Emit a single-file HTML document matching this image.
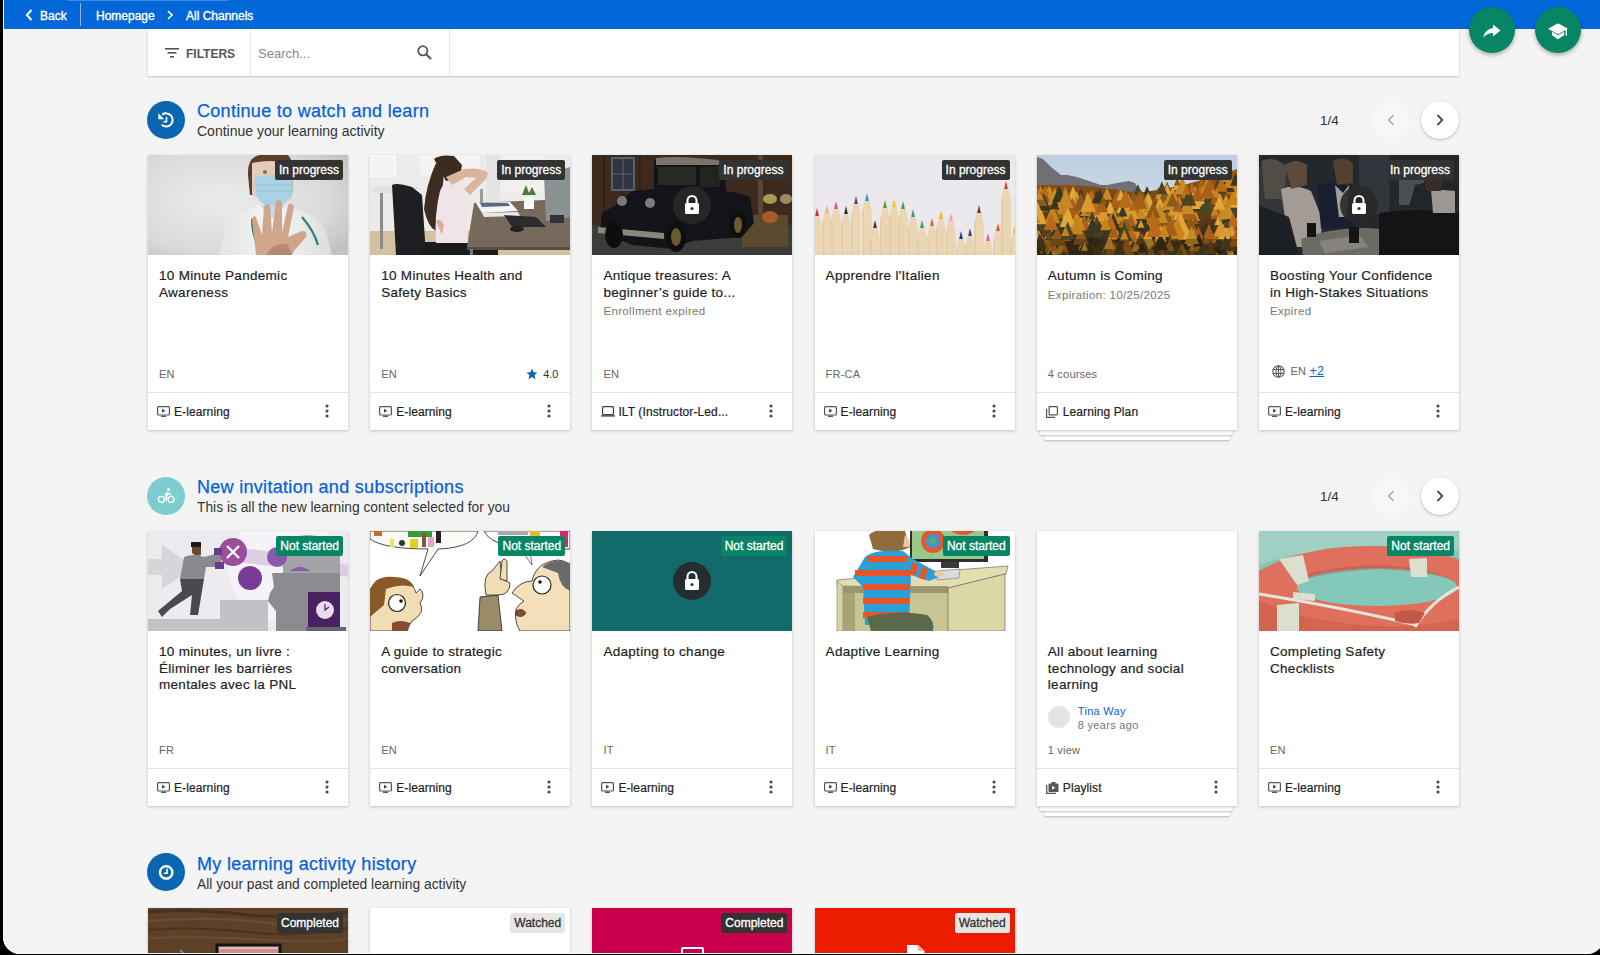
<!DOCTYPE html><html><head><meta charset="utf-8"><style>
*{box-sizing:border-box;margin:0;padding:0}
html,body{width:1600px;height:955px;overflow:hidden;background:#000}
body{font-family:"Liberation Sans",sans-serif;color:#333;position:relative}
.win{position:absolute;left:0;top:0;width:1600px;height:955px;background:#f4f4f4;overflow:hidden}
.mask{position:absolute;left:3px;top:-30px;width:1601px;height:983.5px;border-radius:0 0 17px 17px;box-shadow:0 0 0 60px #000, inset 1px -1px 0 rgba(255,255,255,0.95);z-index:50;pointer-events:none}
.abs{position:absolute}
.topbar{position:absolute;left:0;top:0;width:1600px;height:29px;background:#0268d9}
.topbar .t{position:absolute;top:9px;color:#fff;font-size:12px;line-height:15px;-webkit-text-stroke:0.35px #fff}
.fab{position:absolute;width:46px;height:46px;border-radius:50%;background:#078564;box-shadow:0 2px 4px rgba(0,0,0,.3)}
.fab svg{position:absolute;left:50%;top:50%;transform:translate(-50%,-40%)}
.filterbar{position:absolute;left:148px;top:29px;width:1311px;height:47px;background:#fff;box-shadow:0 1px 2px rgba(0,0,0,.2)}
.sec-ic{position:absolute;width:38px;height:38px;border-radius:50%}
.sec-ic svg{position:absolute;left:10px;top:10px}
.sec-t{position:absolute;font-size:18px;line-height:22px;color:#0760dc;letter-spacing:0.3px;-webkit-text-stroke:0.25px #0760dc}
.sec-s{position:absolute;font-size:14px;line-height:17px;color:#333}
.sec-s.n{font-size:13.8px}
.pg{position:absolute;font-size:13.5px;line-height:16px;color:#333}
.nav{position:absolute;width:38px;height:38px;border-radius:50%}
.nav.dis{background:#f7f7f7}
.nav.en{background:#fff;box-shadow:0 1px 3px rgba(0,0,0,.25)}
.nav svg{position:absolute;left:50%;top:50%;transform:translate(-50%,-50%)}
.card{position:absolute;width:200px;height:275px;background:#fff;box-shadow:0 1px 3px rgba(0,0,0,.22);overflow:hidden}
.stack1,.stack2{position:absolute;height:6px;background:#fff;box-shadow:0 1px 2px rgba(0,0,0,.25);border-radius:0 0 2px 2px}
.stack1{width:193px}
.stack2{width:186px}
.img{position:absolute;left:0;top:0;width:200px;height:100px;overflow:hidden;background:#fff}
.img svg{display:block}
.badge{position:absolute;top:5px;right:5px;height:20px;line-height:20px;padding:0 4px;font-size:12px;border-radius:2px}
.badge.dark{background:#333;color:#fff;-webkit-text-stroke:0.3px #fff}
.badge.green{background:#078564;color:#fff;-webkit-text-stroke:0.3px #fff}
.badge.light{background:#e6e6e6;color:#333;-webkit-text-stroke:0.3px #333}
.lock{position:absolute;left:81px;top:31px;width:38px;height:38px;border-radius:50%;background:rgba(40,40,40,0.9)}
.lock svg{position:absolute;left:11px;top:9px}
.title{position:absolute;left:11px;top:113px;width:180px;font-size:13.5px;line-height:16.5px;color:#1e1e1e;letter-spacing:0.3px;-webkit-text-stroke:0.2px #1e1e1e}
.sub{position:absolute;left:11px;font-size:11.5px;line-height:14px;color:#777;letter-spacing:0.35px}
.lang{position:absolute;left:11px;top:212px;font-size:11px;line-height:14px;color:#666;letter-spacing:0.2px}
.div{position:absolute;left:0;top:237px;width:200px;height:1px;background:#e3e3e3}
.foot{position:absolute;left:0;top:238px;width:200px;height:37px}
.ficon{position:absolute;left:9px;top:13px;line-height:0}
.ftxt{position:absolute;left:26px;top:11.5px;font-size:12px;line-height:15px;color:#222;letter-spacing:0.1px;-webkit-text-stroke:0.2px #222}
.kebab{position:absolute;left:177px;top:11px;line-height:0}
</style></head><body><div class="win">
<div class="topbar"><div class="abs" style="left:67px;top:0;width:162px;height:1px;background:rgba(255,255,255,0.22)"></div>
<svg class="abs" style="left:25px;top:9px" width="8" height="12" viewBox="0 0 8 12"><path d="M6.5 1 L1.8 6 L6.5 11" fill="none" stroke="#fff" stroke-width="2"/></svg>
<span class="t" style="left:40px">Back</span>
<div class="abs" style="left:80px;top:3px;width:1px;height:23px;background:#8fb6ee"></div>
<span class="t" style="left:96px">Homepage</span>
<svg class="abs" style="left:167px;top:10px" width="6" height="10" viewBox="0 0 6 10"><path d="M1 1 L5 5 L1 9" fill="none" stroke="#fff" stroke-width="1.6"/></svg>
<span class="t" style="left:186px">All Channels</span>
</div><div class="fab" style="left:1469px;top:6.5px"><svg width="18" height="14" viewBox="0 0 18 14"><path d="M10 0 L17.5 6 L10 12 V8.5 Q3 8.5 0 14 Q1 5 10 3.5 Z" fill="#fff"/></svg></div>
<div class="fab" style="left:1535px;top:6.5px"><svg width="20" height="17" viewBox="0 0 20 17"><path d="M10 0 L20 5.5 L10 11 L0 5.5 Z" fill="#fff"/><path d="M4 8.5 V12 L10 16 L16 12 V8.5 L10 12 Z" fill="#fff"/><rect x="17.5" y="5.5" width="1.5" height="7" fill="#fff"/></svg></div><div class="filterbar">
<svg class="abs" style="left:17px;top:19px" width="14" height="10" viewBox="0 0 14 10"><rect x="0" y="0" width="14" height="1.6" fill="#555"/><rect x="2.5" y="4" width="9" height="1.6" fill="#555"/><rect x="5" y="8" width="4" height="1.6" fill="#555"/></svg>
<span class="abs" style="left:38px;top:17px;font-size:12px;line-height:16px;font-weight:bold;color:#555">FILTERS</span>
<div class="abs" style="left:102px;top:0;width:1px;height:47px;background:#e6e6e6"></div>
<span class="abs" style="left:110px;top:17px;font-size:13px;line-height:16px;color:#888">Search...</span>
<svg class="abs" style="left:269px;top:16px" width="15" height="15" viewBox="0 0 15 15"><circle cx="5.8" cy="5.8" r="4.6" fill="none" stroke="#555" stroke-width="1.8"/><path d="M9.2 9.2 L14 14" stroke="#555" stroke-width="2"/></svg>
<div class="abs" style="left:301px;top:0;width:1px;height:47px;background:#e6e6e6"></div>
</div><div class="sec-ic" style="left:147px;top:101px;background:#0a66b1"><svg width="18" height="18" viewBox="0 0 18 18"><path d="M4.6 13.8 A6.6 6.6 0 1 0 5.2 3.6" fill="none" stroke="#fff" stroke-width="2"/><path d="M1.3 2.3 V8.2 H7.2 Z" fill="#fff"/><path d="M9.5 6 V10.7 H6.4" fill="none" stroke="#fff" stroke-width="1.6"/></svg></div><div class="sec-t" style="left:197px;top:100px">Continue to watch and learn</div><div class="sec-s" style="left:197px;top:123px">Continue your learning activity</div><div class="pg" style="left:1320px;top:113px">1/4</div><div class="nav dis" style="left:1372px;top:101px"><svg width="8" height="12" viewBox="0 0 8 12"><path d="M6.5 1 L1.8 6 L6.5 11" fill="none" stroke="#aaa" stroke-width="1.6"/></svg></div><div class="nav en" style="left:1421px;top:101px"><svg width="8" height="12" viewBox="0 0 8 12"><path d="M1.5 1 L6.2 6 L1.5 11" fill="none" stroke="#333" stroke-width="1.8"/></svg></div><div class="sec-ic" style="left:147px;top:477px;background:#7dcdd0"><svg width="18" height="18" viewBox="0 0 18 18"><circle cx="4.4" cy="12.4" r="3" fill="none" stroke="#fff" stroke-width="1.3"/><circle cx="14" cy="12.4" r="3" fill="none" stroke="#fff" stroke-width="1.3"/><circle cx="11.5" cy="2.6" r="1.5" fill="#fff"/><path d="M7.8 7.6 Q8.3 5.1 10.8 5.1 L14.6 7.4 L14.2 8.3 L11.1 7.3 L10.2 9.6 L9.7 14.2 L8.6 14.2 L8.6 9.8 Z" fill="#fff"/></svg></div><div class="sec-t" style="left:197px;top:476px">New invitation and subscriptions</div><div class="sec-s n" style="left:197px;top:499px">This is all the new learning content selected for you</div><div class="pg" style="left:1320px;top:489px">1/4</div><div class="nav dis" style="left:1372px;top:477px"><svg width="8" height="12" viewBox="0 0 8 12"><path d="M6.5 1 L1.8 6 L6.5 11" fill="none" stroke="#aaa" stroke-width="1.6"/></svg></div><div class="nav en" style="left:1421px;top:477px"><svg width="8" height="12" viewBox="0 0 8 12"><path d="M1.5 1 L6.2 6 L1.5 11" fill="none" stroke="#333" stroke-width="1.8"/></svg></div><div class="sec-ic" style="left:147px;top:852.5px;background:#0a66b1"><svg width="18" height="18" viewBox="0 0 18 18"><circle cx="9.2" cy="9.4" r="6.2" fill="none" stroke="#fff" stroke-width="2.4"/><path d="M10 5.8 V10.2 H6.8" fill="none" stroke="#fff" stroke-width="1.6"/></svg></div><div class="sec-t" style="left:197px;top:853.0px">My learning activity history</div><div class="sec-s n" style="left:197px;top:876.0px">All your past and completed learning activity</div><div class="card" style="left:148px;top:155px"><div class="img"><svg width="200" height="100" viewBox="0 0 200 100">
<defs><radialGradient id="d1" cx="0.38" cy="0.45" r="0.75"><stop offset="0" stop-color="#ececec"/><stop offset="0.7" stop-color="#dadada"/><stop offset="1" stop-color="#c2c2c2"/></radialGradient>
<linearGradient id="d1c" x1="0" y1="0" x2="1" y2="0"><stop offset="0" stop-color="#e4e4e4"/><stop offset="0.5" stop-color="#f6f6f6"/><stop offset="1" stop-color="#dcdcdc"/></linearGradient></defs>
<rect width="200" height="100" fill="url(#d1)"/>
<path d="M100 20 Q99 2 112 0 H140 Q146 6 145 22 L144 40 H102 Z" fill="#5a3e2c"/>
<path d="M104 8 Q120 4 142 8 L144 40 Q124 50 104 40 Z" fill="#e6cbb8"/>
<path d="M106 22 Q124 18 145 22 L144 42 Q134 52 124 52 Q112 50 108 40 Z" fill="#a9d2e6"/>
<path d="M108 30 H144 M108 36 H144" stroke="#93bcd2" stroke-width="1"/>
<circle cx="117" cy="17" r="2" fill="#6a7a6a"/>
<path d="M72 100 L76 74 Q80 62 100 56 L110 50 H140 L152 56 Q172 62 178 76 L184 100 Z" fill="url(#d1c)"/>
<path d="M112 50 L124 64 L138 50 Z" fill="#c8d8e8"/>
<path d="M104 64 Q104 80 110 90" stroke="#2f7c7a" stroke-width="2" fill="none"/>
<path d="M154 62 Q166 76 170 90" stroke="#2f7c7a" stroke-width="2.2" fill="none"/>
<path d="M108 100 L104 64 Q104 60 108 62 L114 80 L116 52 Q118 47 122 50 L124 78 L128 46 Q132 43 134 48 L134 78 L140 50 Q144 46 146 52 L140 82 L154 76 Q160 76 158 82 L146 96 L144 100 Z" fill="#cfa58c"/>
<path d="M118 100 Q126 86 140 90 L144 100 Z" fill="#b88a72"/>
</svg><span class="badge dark">In progress</span></div><div class="title">10 Minute Pandemic<br>Awareness</div><div class="lang">EN</div><div class="div"></div><div class="foot"><span class="ficon"><svg width="13" height="11" viewBox="0 0 13 11"><rect x="0.6" y="0.6" width="11.8" height="8.4" rx="1" fill="none" stroke="#555" stroke-width="1.2"/><path d="M5 2.8 L8.4 4.8 L5 6.8 Z" fill="#444"/><rect x="4" y="9.6" width="5" height="1.3" fill="#444"/></svg></span><span class="ftxt">E-learning</span><span class="kebab"><svg width="4" height="14" viewBox="0 0 4 14"><circle cx="2" cy="2" r="1.55" fill="#4a4a4a"/><circle cx="2" cy="7" r="1.55" fill="#4a4a4a"/><circle cx="2" cy="12" r="1.55" fill="#4a4a4a"/></svg></span></div></div><div class="card" style="left:370.2px;top:155px"><div class="img"><svg width="200" height="100" viewBox="0 0 200 100">
<rect width="200" height="100" fill="#ecebea"/>
<rect x="0" y="0" width="26" height="22" fill="#f8f8f6"/>
<rect x="2" y="2" width="22" height="18" fill="#f2f2f0"/>
<rect x="50" y="0" width="60" height="20" fill="#f4f4f2"/>
<rect x="116" y="0" width="14" height="48" fill="#e4e4e2"/>
<rect x="130" y="0" width="44" height="38" fill="#f0f0ee"/>
<path d="M0 76 H200 V100 H0 Z" fill="#d6c0a2"/>
<path d="M3 32 H48 L46 38 H3 Z" fill="#dde4e4"/>
<rect x="10" y="38" width="3" height="56" fill="#8c8c8c"/>
<rect x="110" y="34" width="3" height="36" fill="#9a9a9a"/>
<path d="M22 30 Q26 27 42 32 L52 40 L56 100 H26 Z" fill="#1e1f22"/>
<path d="M50 87 H128 V100 H50 Z" fill="#1c1c1e"/>
<path d="M64 4 Q70 -1 84 1 L92 10 L90 22 L76 26 Z" fill="#3a2a20"/>
<path d="M66 8 Q56 30 54 54 Q58 72 66 76 L72 40 L74 18 Z" fill="#3e2c22"/>
<path d="M74 28 Q88 25 96 32 L98 88 H66 Q64 60 70 36 Z" fill="#f1e4e8"/>
<path d="M76 22 L94 14 Q112 12 118 18 L116 24 L100 40 L94 34 L106 23 L96 22 L82 30 Z" fill="#dcb49c"/>
<path d="M66 66 Q70 62 74 70 L72 80 Z" fill="#d8b098"/>
<path d="M97 92 L104 48 L200 44 V92 Z" fill="#77695c"/>
<path d="M97 92 H200 V95 H97 Z" fill="#5a4e44"/>
<rect x="100" y="94" width="3" height="6" fill="#777"/>
<path d="M106 48 L140 47 L148 56 L112 58 Z" fill="#f4f4f4"/>
<path d="M110 48 L138 48 L140 51 L112 52 Z" fill="#5a6a8a"/>
<path d="M112 58 L148 57 L150 61 L114 62 Z" fill="#e8e8e8"/>
<path d="M134 60 L166 62 L176 72 L142 72 Z" fill="#2a2c30"/>
<ellipse cx="147" cy="74" rx="7" ry="3" fill="#222"/>
<rect x="154" y="42" width="10" height="12" fill="#f8f8f8"/>
<path d="M152 40 L156 30 L159 38 L162 32 L166 40 Z" fill="#4a7a3a"/>
<path d="M174 20 L200 12 V62 L176 66 Z" fill="#8a9294"/>
<rect x="180" y="60" width="14" height="8" fill="#333"/>
</svg><span class="badge dark">In progress</span></div><div class="title">10 Minutes Health and<br>Safety Basics</div><div class="abs" style="left:156px;top:212px;font-size:11px;line-height:14px;color:#333"><svg style="vertical-align:-2px;margin-right:5px" width="12" height="12" viewBox="0 0 12 12"><path d="M6 0.5 L7.6 4.3 L11.6 4.5 L8.5 7.1 L9.5 11.2 L6 9 L2.5 11.2 L3.5 7.1 L0.4 4.5 L4.4 4.3 Z" fill="#0a66b1"/></svg>4.0</div><div class="lang">EN</div><div class="div"></div><div class="foot"><span class="ficon"><svg width="13" height="11" viewBox="0 0 13 11"><rect x="0.6" y="0.6" width="11.8" height="8.4" rx="1" fill="none" stroke="#555" stroke-width="1.2"/><path d="M5 2.8 L8.4 4.8 L5 6.8 Z" fill="#444"/><rect x="4" y="9.6" width="5" height="1.3" fill="#444"/></svg></span><span class="ftxt">E-learning</span><span class="kebab"><svg width="4" height="14" viewBox="0 0 4 14"><circle cx="2" cy="2" r="1.55" fill="#4a4a4a"/><circle cx="2" cy="7" r="1.55" fill="#4a4a4a"/><circle cx="2" cy="12" r="1.55" fill="#4a4a4a"/></svg></span></div></div><div class="card" style="left:592.4px;top:155px"><div class="img"><svg width="200" height="100" viewBox="0 0 200 100">
<rect width="200" height="100" fill="#33241a"/>
<rect x="0" y="0" width="200" height="72" fill="#3e2a1c"/>
<path d="M12 0 V72 M30 0 V72 M48 0 V72 M66 0 V72" stroke="#2a1c12" stroke-width="1.2"/>
<rect x="19" y="2" width="24" height="34" fill="#58606a"/>
<rect x="21" y="4" width="20" height="30" fill="#2e3440"/>
<path d="M31 4 V34 M21 19 H41" stroke="#58606a" stroke-width="1.2"/>
<rect x="166" y="0" width="5" height="64" fill="#5a4632"/>
<path d="M0 70 H200 V100 H0 Z" fill="#3c3c3c"/>
<path d="M150 60 H196 V92 H150 Z" fill="#5a4a30"/>
<ellipse cx="178" cy="62" rx="8" ry="6" fill="#a85a28"/>
<ellipse cx="178" cy="44" rx="7" ry="5" fill="#a89a58"/>
<ellipse cx="194" cy="44" rx="6" ry="5" fill="#9a8a60"/>
<path d="M62 6 Q64 2 100 3 L132 6 L134 36 L146 38 L158 42 L162 68 L150 82 L100 86 L80 94 L40 90 L8 76 L10 58 L24 50 L40 36 L62 34 Z" fill="#12141a"/>
<path d="M64 3 Q90 0 132 6 L130 10 L64 10 Z" fill="#7a7468"/>
<path d="M66 12 H104 V30 H66 Z" fill="#262a22"/>
<path d="M108 12 H128 V32 H108 Z" fill="#222420"/>
<path d="M6 72 L72 78 L72 84 L6 78 Z" fill="#8a8678"/>
<circle cx="30" cy="46" r="5" fill="#7a7a7a"/><circle cx="58" cy="48" r="5" fill="#7a7a7a"/>
<ellipse cx="22" cy="80" rx="9" ry="13" fill="#0e0e0e"/>
<ellipse cx="84" cy="82" rx="10" ry="15" fill="#0e0e0e"/>
<ellipse cx="84" cy="82" rx="5" ry="9" fill="#6a5a30"/>
<ellipse cx="146" cy="70" rx="8" ry="13" fill="#0e0e0e"/>
<ellipse cx="146" cy="70" rx="4" ry="8" fill="#6a5a30"/>
</svg><div class="lock"><svg width="16" height="20" viewBox="0 0 16 20"><path d="M3.5 8 V5.5 A4.5 4.5 0 0 1 12.5 5.5 V8" fill="none" stroke="#fff" stroke-width="2"/><rect x="1" y="8" width="14" height="11" rx="1.5" fill="#fff"/><circle cx="8" cy="13.5" r="1.6" fill="#333"/></svg></div><span class="badge dark">In progress</span></div><div class="title">Antique treasures: A<br>beginner’s guide to...</div><div class="sub" style="top:149px;color:#777">Enrollment expired</div><div class="lang">EN</div><div class="div"></div><div class="foot"><span class="ficon"><svg width="14" height="11" viewBox="0 0 14 11"><rect x="1.6" y="0.6" width="10.8" height="8" rx="0.6" fill="none" stroke="#444" stroke-width="1.2"/><rect x="0" y="9.2" width="14" height="1.4" fill="#444"/></svg></span><span class="ftxt">ILT (Instructor-Led...</span><span class="kebab"><svg width="4" height="14" viewBox="0 0 4 14"><circle cx="2" cy="2" r="1.55" fill="#4a4a4a"/><circle cx="2" cy="7" r="1.55" fill="#4a4a4a"/><circle cx="2" cy="12" r="1.55" fill="#4a4a4a"/></svg></span></div></div><div class="card" style="left:814.6px;top:155px"><div class="img"><svg width="200" height="100" viewBox="0 0 200 100"><rect width="200" height="100" fill="#ece9ee"/><path d="M-2.8 100 V71 L0.8 55 L3.2 55 L6.8 71 V100 Z" fill="#ebd6b4"/><path d="M-1.9999999999999998 100 V71" stroke="#d8c09a" stroke-width="0.8"/><path d="M0.19999999999999996 61 L2 53 L3.8 61 Z" fill="#d8203a"/><path d="M7.2 100 V68 L10.8 52 L13.2 52 L16.8 68 V100 Z" fill="#ebd6b4"/><path d="M8.0 100 V68" stroke="#d8c09a" stroke-width="0.8"/><path d="M10.2 58 L12 50 L13.8 58 Z" fill="#f0b090"/><path d="M16.2 100 V64 L19.8 48 L22.2 48 L25.8 64 V100 Z" fill="#ebd6b4"/><path d="M17.0 100 V64" stroke="#d8c09a" stroke-width="0.8"/><path d="M19.2 54 L21 46 L22.8 54 Z" fill="#e84a9a"/><path d="M26.2 100 V69 L29.8 53 L32.2 53 L35.8 69 V100 Z" fill="#ebd6b4"/><path d="M27.0 100 V69" stroke="#d8c09a" stroke-width="0.8"/><path d="M29.2 59 L31 51 L32.8 59 Z" fill="#303030"/><path d="M36.2 100 V59 L39.8 43 L42.2 43 L45.8 59 V100 Z" fill="#ebd6b4"/><path d="M37.0 100 V59" stroke="#d8c09a" stroke-width="0.8"/><path d="M39.2 49 L41 41 L42.8 49 Z" fill="#5a3a8a"/><path d="M47.2 100 V56 L50.8 40 L53.2 40 L56.8 56 V100 Z" fill="#ebd6b4"/><path d="M48.0 100 V56" stroke="#d8c09a" stroke-width="0.8"/><path d="M50.2 46 L52 38 L53.8 46 Z" fill="#20a0d8"/><path d="M55.2 100 V83 L58.8 67 L61.2 67 L64.8 83 V100 Z" fill="#ebd6b4"/><path d="M56.0 100 V83" stroke="#d8c09a" stroke-width="0.8"/><path d="M58.2 73 L60 65 L61.8 73 Z" fill="#6a2030"/><path d="M65.2 100 V63 L68.8 47 L71.2 47 L74.8 63 V100 Z" fill="#ebd6b4"/><path d="M66.0 100 V63" stroke="#d8c09a" stroke-width="0.8"/><path d="M68.2 53 L70 45 L71.8 53 Z" fill="#40a030"/><path d="M74.2 100 V62 L77.8 46 L80.2 46 L83.8 62 V100 Z" fill="#ebd6b4"/><path d="M75.0 100 V62" stroke="#d8c09a" stroke-width="0.8"/><path d="M77.2 52 L79 44 L80.8 52 Z" fill="#f0c820"/><path d="M83.2 100 V64 L86.8 48 L89.2 48 L92.8 64 V100 Z" fill="#ebd6b4"/><path d="M84.0 100 V64" stroke="#d8c09a" stroke-width="0.8"/><path d="M86.2 54 L88 46 L89.8 54 Z" fill="#40a040"/><path d="M93.2 100 V72 L96.8 56 L99.2 56 L102.8 72 V100 Z" fill="#ebd6b4"/><path d="M94.0 100 V72" stroke="#d8c09a" stroke-width="0.8"/><path d="M96.2 62 L98 54 L99.8 62 Z" fill="#20a0a0"/><path d="M102.2 100 V83 L105.8 67 L108.2 67 L111.8 83 V100 Z" fill="#ebd6b4"/><path d="M103.0 100 V83" stroke="#d8c09a" stroke-width="0.8"/><path d="M105.2 73 L107 65 L108.8 73 Z" fill="#20a070"/><path d="M112.2 100 V81 L115.8 65 L118.2 65 L121.8 81 V100 Z" fill="#ebd6b4"/><path d="M113.0 100 V81" stroke="#d8c09a" stroke-width="0.8"/><path d="M115.2 71 L117 63 L118.8 71 Z" fill="#f06020"/><path d="M121.2 100 V74 L124.8 58 L127.2 58 L130.8 74 V100 Z" fill="#ebd6b4"/><path d="M122.0 100 V74" stroke="#d8c09a" stroke-width="0.8"/><path d="M124.2 64 L126 56 L127.8 64 Z" fill="#f0b820"/><path d="M131.2 100 V76 L134.8 60 L137.2 60 L140.8 76 V100 Z" fill="#ebd6b4"/><path d="M132.0 100 V76" stroke="#d8c09a" stroke-width="0.8"/><path d="M134.2 66 L136 58 L137.8 66 Z" fill="#f0a0c0"/><path d="M141.2 100 V94 L144.8 78 L147.2 78 L150.8 94 V100 Z" fill="#ebd6b4"/><path d="M142.0 100 V94" stroke="#d8c09a" stroke-width="0.8"/><path d="M144.2 84 L146 76 L147.8 84 Z" fill="#203a8a"/><path d="M150.2 100 V91 L153.8 75 L156.2 75 L159.8 91 V100 Z" fill="#ebd6b4"/><path d="M151.0 100 V91" stroke="#d8c09a" stroke-width="0.8"/><path d="M153.2 81 L155 73 L156.8 81 Z" fill="#3a3a9a"/><path d="M159.2 100 V68 L162.8 52 L165.2 52 L168.8 68 V100 Z" fill="#ebd6b4"/><path d="M160.0 100 V68" stroke="#d8c09a" stroke-width="0.8"/><path d="M162.2 58 L164 50 L165.8 58 Z" fill="#6a3a2a"/><path d="M168.2 100 V96 L171.8 80 L174.2 80 L177.8 96 V100 Z" fill="#ebd6b4"/><path d="M169.0 100 V96" stroke="#d8c09a" stroke-width="0.8"/><path d="M171.2 86 L173 78 L174.8 86 Z" fill="#e060a0"/><path d="M178.2 100 V86 L181.8 70 L184.2 70 L187.8 86 V100 Z" fill="#ebd6b4"/><path d="M179.0 100 V86" stroke="#d8c09a" stroke-width="0.8"/><path d="M181.2 76 L183 68 L184.8 76 Z" fill="#f05020"/><path d="M186.2 100 V44 L189.8 28 L192.2 28 L195.8 44 V100 Z" fill="#ebd6b4"/><path d="M187.0 100 V44" stroke="#d8c09a" stroke-width="0.8"/><path d="M189.2 34 L191 26 L192.8 34 Z" fill="#d83a3a"/><path d="M195.2 100 V88 L198.8 72 L201.2 72 L204.8 88 V100 Z" fill="#ebd6b4"/><path d="M196.0 100 V88" stroke="#d8c09a" stroke-width="0.8"/><path d="M198.2 78 L200 70 L201.8 78 Z" fill="#e0b040"/></svg><span class="badge dark">In progress</span></div><div class="title">Apprendre l'Italien</div><div class="lang">FR-CA</div><div class="div"></div><div class="foot"><span class="ficon"><svg width="13" height="11" viewBox="0 0 13 11"><rect x="0.6" y="0.6" width="11.8" height="8.4" rx="1" fill="none" stroke="#555" stroke-width="1.2"/><path d="M5 2.8 L8.4 4.8 L5 6.8 Z" fill="#444"/><rect x="4" y="9.6" width="5" height="1.3" fill="#444"/></svg></span><span class="ftxt">E-learning</span><span class="kebab"><svg width="4" height="14" viewBox="0 0 4 14"><circle cx="2" cy="2" r="1.55" fill="#4a4a4a"/><circle cx="2" cy="7" r="1.55" fill="#4a4a4a"/><circle cx="2" cy="12" r="1.55" fill="#4a4a4a"/></svg></span></div></div><div class="stack2" style="left:1043.8px;top:434px"></div><div class="stack1" style="left:1040.3px;top:429px"></div><div class="card" style="left:1036.8px;top:155px"><div class="img"><svg width="200" height="100" viewBox="0 0 200 100"><defs><linearGradient id="sk" x1="0" y1="0" x2="0" y2="1"><stop offset="0" stop-color="#bccfe0"/><stop offset="1" stop-color="#dfe4e8"/></linearGradient>
<linearGradient id="fb" x1="0" y1="0" x2="0" y2="1"><stop offset="0" stop-color="#9a5a18"/><stop offset="1" stop-color="#2e2214"/></linearGradient></defs>
<rect width="200" height="100" fill="url(#sk)"/>
<path d="M0 2 L6 4 L14 12 L24 20 L30 20 L40 22 L52 26 L64 30 L70 30 L80 28 L92 26 L98 28 L104 38 H0 Z" fill="#707074"/>
<path d="M0 30 Q50 28 100 38 Q150 32 200 14 V100 H0 Z" fill="url(#fb)"/><path d="M63.0 42.1 L56.4 57.9 H69.6 Z" fill="#d89a30"/><path d="M167.5 25.0 L161.2 40.0 H173.8 Z" fill="#8a5a1a"/><path d="M40.1 36.4 L34.6 49.4 H45.6 Z" fill="#3a3620"/><path d="M14.0 59.1 L6.5 77.0 H21.6 Z" fill="#d89a30"/><path d="M194.0 67.9 L187.7 82.8 H200.3 Z" fill="#c8841c"/><path d="M116.2 55.0 L107.9 74.7 H124.5 Z" fill="#c8841c"/><path d="M111.9 35.9 L106.4 49.0 H117.4 Z" fill="#8a5a1a"/><path d="M19.7 51.0 L12.3 68.8 H27.2 Z" fill="#b86a18"/><path d="M16.6 69.6 L12.3 79.8 H20.9 Z" fill="#d89a30"/><path d="M110.0 31.0 L106.4 39.7 H113.7 Z" fill="#3a3620"/><path d="M99.2 69.1 L92.0 86.4 H106.5 Z" fill="#c88a26"/><path d="M118.0 59.1 L113.1 70.7 H122.8 Z" fill="#b86a18"/><path d="M141.8 40.5 L135.5 55.4 H148.0 Z" fill="#8a5a1a"/><path d="M99.0 56.6 L93.4 70.0 H104.6 Z" fill="#d89a30"/><path d="M19.8 58.8 L12.6 75.9 H27.0 Z" fill="#b86a18"/><path d="M191.0 49.9 L182.8 69.5 H199.2 Z" fill="#d89a30"/><path d="M155.6 65.5 L147.8 84.0 H163.3 Z" fill="#a86018"/><path d="M66.4 55.8 L60.6 69.8 H72.3 Z" fill="#c88a26"/><path d="M9.4 35.3 L4.7 46.5 H14.2 Z" fill="#d89a30"/><path d="M7.7 78.6 L1.1 94.4 H14.4 Z" fill="#4a3a1c"/><path d="M181.3 44.5 L173.2 63.8 H189.4 Z" fill="#a86018"/><path d="M30.3 38.0 L26.6 46.7 H33.9 Z" fill="#e0a83a"/><path d="M22.2 46.8 L16.8 59.5 H27.5 Z" fill="#c88a26"/><path d="M11.9 60.7 L5.8 75.3 H18.1 Z" fill="#b86a18"/><path d="M167.0 88.7 L162.3 100.1 H171.8 Z" fill="#4a4424"/><path d="M138.4 51.6 L133.8 62.4 H142.9 Z" fill="#d89a30"/><path d="M32.0 46.2 L27.5 57.0 H36.5 Z" fill="#c88a26"/><path d="M169.5 32.0 L164.7 43.4 H174.3 Z" fill="#b86a18"/><path d="M83.0 57.7 L76.8 72.5 H89.2 Z" fill="#b86a18"/><path d="M140.0 62.0 L133.5 77.4 H146.5 Z" fill="#c8841c"/><path d="M90.9 91.4 L82.7 110.8 H99.1 Z" fill="#4a3a1c"/><path d="M77.8 65.1 L72.4 77.9 H83.1 Z" fill="#3a3620"/><path d="M9.1 43.5 L5.0 53.4 H13.3 Z" fill="#a86018"/><path d="M121.2 32.3 L114.9 47.1 H127.4 Z" fill="#8a5a1a"/><path d="M16.3 54.8 L12.8 63.1 H19.8 Z" fill="#3a3620"/><path d="M124.0 35.4 L119.3 46.5 H128.6 Z" fill="#a86018"/><path d="M121.5 60.3 L117.5 69.7 H125.4 Z" fill="#c88a26"/><path d="M203.6 52.7 L197.8 66.5 H209.4 Z" fill="#d89a30"/><path d="M25.3 82.4 L18.2 99.2 H32.4 Z" fill="#c88a26"/><path d="M28.9 31.4 L20.7 50.8 H37.1 Z" fill="#8a5a1a"/><path d="M71.0 79.0 L63.0 98.0 H78.9 Z" fill="#6a4418"/><path d="M176.3 74.4 L171.6 85.6 H181.0 Z" fill="#a86018"/><path d="M185.7 44.8 L181.3 55.4 H190.2 Z" fill="#8a5a1a"/><path d="M158.6 45.5 L154.1 56.1 H163.1 Z" fill="#3a3620"/><path d="M164.3 85.1 L157.2 101.9 H171.4 Z" fill="#4a3a1c"/><path d="M69.7 34.1 L66.2 42.5 H73.2 Z" fill="#e0a83a"/><path d="M94.2 46.5 L87.8 61.8 H100.6 Z" fill="#a86018"/><path d="M88.9 95.8 L80.6 115.7 H97.3 Z" fill="#3a2a14"/><path d="M42.6 44.2 L38.2 54.7 H47.0 Z" fill="#c8841c"/><path d="M95.7 77.0 L88.3 94.6 H103.1 Z" fill="#d89a30"/><path d="M20.2 56.7 L13.2 73.3 H27.1 Z" fill="#3a3620"/><path d="M95.4 45.6 L88.0 63.0 H102.7 Z" fill="#a86018"/><path d="M13.2 96.2 L6.2 112.8 H20.2 Z" fill="#3a2a14"/><path d="M147.2 34.0 L143.2 43.5 H151.2 Z" fill="#b86a18"/><path d="M119.1 59.9 L112.4 75.7 H125.7 Z" fill="#c88a26"/><path d="M133.0 49.8 L126.9 64.4 H139.2 Z" fill="#b86a18"/><path d="M-0.5 85.5 L-7.5 102.3 H6.5 Z" fill="#d89a30"/><path d="M191.1 51.0 L183.3 69.4 H198.8 Z" fill="#3a3620"/><path d="M0.9 43.4 L-5.0 57.4 H6.8 Z" fill="#a86018"/><path d="M49.5 59.9 L45.4 69.5 H53.5 Z" fill="#a86018"/><path d="M183.5 71.2 L176.1 89.0 H191.0 Z" fill="#8a5a1a"/><path d="M83.3 94.5 L77.4 108.5 H89.2 Z" fill="#6a4418"/><path d="M-1.1 59.7 L-5.4 69.9 H3.2 Z" fill="#c8841c"/><path d="M158.0 30.9 L153.9 40.6 H162.0 Z" fill="#d89a30"/><path d="M111.9 50.2 L105.9 64.4 H117.8 Z" fill="#8a5a1a"/><path d="M96.3 85.2 L88.5 103.8 H104.1 Z" fill="#4a3a1c"/><path d="M3.9 35.2 L-1.8 48.7 H9.5 Z" fill="#c8841c"/><path d="M154.6 92.9 L149.0 106.3 H160.2 Z" fill="#8a5a1a"/><path d="M36.9 49.6 L31.0 63.7 H42.8 Z" fill="#c88a26"/><path d="M101.6 45.6 L95.6 59.9 H107.6 Z" fill="#e0a83a"/><path d="M188.8 90.8 L184.4 101.2 H193.2 Z" fill="#3a2a14"/><path d="M77.4 53.9 L70.7 70.0 H84.1 Z" fill="#4a4424"/><path d="M10.4 76.4 L3.0 93.8 H17.7 Z" fill="#b86a18"/><path d="M130.1 51.3 L125.5 62.3 H134.8 Z" fill="#b86a18"/><path d="M198.2 31.6 L190.0 51.0 H206.3 Z" fill="#4a4424"/><path d="M180.8 28.9 L174.1 44.9 H187.6 Z" fill="#3a3620"/><path d="M28.9 60.1 L22.9 74.2 H34.9 Z" fill="#a86018"/><path d="M83.5 56.9 L79.6 66.0 H87.3 Z" fill="#a86018"/><path d="M-0.9 67.9 L-6.5 81.2 H4.7 Z" fill="#c8841c"/><path d="M75.7 67.4 L70.9 79.0 H80.6 Z" fill="#d89a30"/><path d="M18.7 94.2 L14.2 105.0 H23.2 Z" fill="#4a3a1c"/><path d="M3.3 84.1 L-1.4 95.4 H8.0 Z" fill="#b86a18"/><path d="M173.4 72.9 L165.3 92.2 H181.5 Z" fill="#4a4424"/><path d="M26.4 94.3 L20.1 109.2 H32.6 Z" fill="#3a2a14"/><path d="M162.9 33.0 L155.0 51.7 H170.8 Z" fill="#e0a83a"/><path d="M192.1 68.3 L184.7 85.9 H199.5 Z" fill="#d89a30"/><path d="M122.7 41.2 L118.0 52.4 H127.4 Z" fill="#d89a30"/><path d="M90.3 56.0 L84.1 70.6 H96.4 Z" fill="#e0a83a"/><path d="M125.6 27.2 L118.6 43.7 H132.5 Z" fill="#d89a30"/><path d="M198.5 35.2 L194.3 45.4 H202.8 Z" fill="#e0a83a"/><path d="M127.0 64.2 L122.6 74.7 H131.4 Z" fill="#c88a26"/><path d="M100.0 40.8 L94.9 53.0 H105.1 Z" fill="#c8841c"/><path d="M203.8 14.7 L200.4 22.9 H207.3 Z" fill="#8a5a1a"/><path d="M110.7 40.3 L105.0 53.9 H116.5 Z" fill="#c88a26"/><path d="M17.3 87.2 L11.8 100.3 H22.9 Z" fill="#c88a26"/><path d="M181.6 97.5 L176.7 109.2 H186.5 Z" fill="#3a3620"/><path d="M67.0 88.6 L60.0 105.1 H73.9 Z" fill="#4a3a1c"/><path d="M201.2 85.6 L197.8 93.8 H204.6 Z" fill="#3a2a14"/><path d="M12.7 88.7 L5.0 107.1 H20.5 Z" fill="#e0a83a"/><path d="M140.5 25.1 L136.2 35.3 H144.8 Z" fill="#e0a83a"/><path d="M88.6 50.9 L80.4 70.4 H96.8 Z" fill="#8a5a1a"/><path d="M62.9 34.1 L55.1 52.7 H70.7 Z" fill="#3a3620"/><path d="M69.9 32.3 L64.6 44.8 H75.2 Z" fill="#c88a26"/><path d="M53.6 76.3 L49.0 87.3 H58.2 Z" fill="#3a2a14"/><path d="M25.2 70.9 L19.9 83.6 H30.6 Z" fill="#e0a83a"/><path d="M58.9 47.5 L52.6 62.5 H65.2 Z" fill="#8a5a1a"/><path d="M174.2 29.2 L166.3 47.9 H182.0 Z" fill="#4a4424"/><path d="M155.5 77.4 L149.7 91.3 H161.4 Z" fill="#e0a83a"/><path d="M130.1 26.6 L122.5 44.6 H137.6 Z" fill="#8a5a1a"/><path d="M126.7 79.7 L119.3 97.4 H134.2 Z" fill="#b86a18"/><path d="M153.1 65.3 L145.6 83.0 H160.6 Z" fill="#c8841c"/><path d="M168.5 65.5 L160.7 84.2 H176.4 Z" fill="#3a3620"/><path d="M12.9 31.8 L6.3 47.4 H19.4 Z" fill="#d89a30"/><path d="M74.1 62.9 L70.5 71.5 H77.7 Z" fill="#c8841c"/><path d="M126.5 75.7 L120.7 89.5 H132.3 Z" fill="#3a2a14"/><path d="M152.1 60.1 L146.1 74.5 H158.2 Z" fill="#8a5a1a"/><path d="M8.9 81.2 L4.2 92.2 H13.5 Z" fill="#d89a30"/><path d="M44.3 83.1 L39.8 93.9 H48.8 Z" fill="#4a3a1c"/><path d="M11.1 93.6 L6.3 105.1 H15.9 Z" fill="#c8841c"/><path d="M130.0 29.2 L125.9 38.9 H134.1 Z" fill="#e0a83a"/><path d="M131.8 76.3 L125.3 91.8 H138.3 Z" fill="#3a2a14"/><path d="M97.0 98.2 L93.2 107.4 H100.9 Z" fill="#3a3620"/><path d="M56.1 66.8 L50.4 80.4 H61.8 Z" fill="#c88a26"/><path d="M156.1 99.5 L150.0 114.0 H162.2 Z" fill="#e0a83a"/><path d="M191.6 14.9 L185.9 28.4 H197.3 Z" fill="#8a5a1a"/><path d="M198.3 51.7 L193.6 62.9 H203.0 Z" fill="#3a3620"/><path d="M187.5 94.0 L183.7 102.9 H191.2 Z" fill="#6a4418"/><path d="M50.0 55.8 L43.6 71.0 H56.4 Z" fill="#8a5a1a"/><path d="M53.7 39.0 L48.5 51.4 H58.9 Z" fill="#c88a26"/><path d="M183.5 56.1 L180.0 64.4 H187.0 Z" fill="#c8841c"/><path d="M194.5 72.3 L189.1 85.1 H199.9 Z" fill="#b86a18"/><path d="M82.4 58.2 L78.4 67.6 H86.4 Z" fill="#a86018"/><path d="M-4.6 82.0 L-12.2 100.1 H3.0 Z" fill="#d89a30"/><path d="M36.1 31.0 L29.0 47.9 H43.2 Z" fill="#e0a83a"/><path d="M73.2 59.0 L64.8 78.9 H81.6 Z" fill="#d89a30"/><path d="M70.7 61.2 L66.0 72.5 H75.5 Z" fill="#c8841c"/><path d="M53.9 34.8 L47.2 50.7 H60.6 Z" fill="#b86a18"/><path d="M47.4 49.2 L41.4 63.4 H53.3 Z" fill="#3a3620"/><path d="M157.4 82.6 L151.9 95.7 H162.9 Z" fill="#c8841c"/><path d="M127.5 93.4 L119.4 112.7 H135.6 Z" fill="#3a2a14"/><path d="M5.4 80.8 L-0.2 94.2 H11.0 Z" fill="#b86a18"/><path d="M55.1 34.7 L47.1 53.8 H63.1 Z" fill="#b86a18"/><path d="M30.9 59.0 L26.1 70.3 H35.6 Z" fill="#e0a83a"/><path d="M150.2 98.1 L145.5 109.2 H154.9 Z" fill="#6a4418"/><path d="M135.5 31.6 L128.9 47.3 H142.1 Z" fill="#d89a30"/><path d="M38.7 93.4 L32.8 107.4 H44.5 Z" fill="#4a3a1c"/><path d="M204.3 51.2 L200.2 60.9 H208.3 Z" fill="#3a3620"/><path d="M46.3 42.9 L40.1 57.5 H52.4 Z" fill="#a86018"/><path d="M45.2 48.6 L39.0 63.4 H51.4 Z" fill="#c8841c"/><path d="M152.4 52.8 L147.0 65.8 H157.9 Z" fill="#8a5a1a"/><path d="M39.1 49.2 L32.0 66.2 H46.3 Z" fill="#c88a26"/><path d="M53.3 97.8 L49.3 107.3 H57.3 Z" fill="#8a5a1a"/><path d="M161.0 87.6 L157.1 96.7 H164.8 Z" fill="#6a4418"/><path d="M88.6 96.9 L81.0 115.1 H96.3 Z" fill="#4a3a1c"/><path d="M144.0 91.8 L138.3 105.4 H149.7 Z" fill="#4a3a1c"/><path d="M190.4 93.8 L184.3 108.1 H196.4 Z" fill="#c88a26"/><path d="M47.2 38.4 L43.0 48.2 H51.3 Z" fill="#8a5a1a"/><path d="M199.1 21.7 L191.6 39.6 H206.6 Z" fill="#c88a26"/><path d="M12.9 84.1 L9.5 92.1 H16.2 Z" fill="#3a2a14"/><path d="M130.6 46.5 L126.6 56.0 H134.6 Z" fill="#e0a83a"/><path d="M105.9 59.0 L98.7 76.1 H113.1 Z" fill="#d89a30"/><path d="M9.8 66.0 L3.5 81.0 H16.1 Z" fill="#4a4424"/><path d="M49.8 85.5 L46.4 93.6 H53.2 Z" fill="#4a3a1c"/><path d="M53.5 53.0 L45.9 71.0 H61.1 Z" fill="#3a3620"/><path d="M94.8 49.3 L90.2 60.2 H99.4 Z" fill="#4a4424"/><path d="M143.0 45.4 L139.5 53.6 H146.4 Z" fill="#c88a26"/><path d="M180.8 70.0 L177.0 79.0 H184.6 Z" fill="#3a3620"/><path d="M135.1 94.2 L130.6 104.9 H139.6 Z" fill="#c8841c"/><path d="M145.8 49.4 L140.5 62.2 H151.2 Z" fill="#c8841c"/><path d="M162.4 78.6 L156.5 92.7 H168.3 Z" fill="#3a2a14"/><path d="M60.5 87.7 L55.9 98.5 H65.0 Z" fill="#4a3a1c"/><path d="M17.9 73.3 L11.5 88.6 H24.3 Z" fill="#3a3620"/><path d="M96.9 94.1 L93.2 102.7 H100.5 Z" fill="#b86a18"/><path d="M6.4 30.1 L0.1 45.2 H12.8 Z" fill="#4a4424"/><path d="M5.9 32.7 L0.5 45.4 H11.2 Z" fill="#a86018"/><path d="M148.9 99.8 L140.8 119.0 H156.9 Z" fill="#6a4418"/><path d="M191.5 78.0 L188.0 86.4 H195.1 Z" fill="#4a4424"/><path d="M201.8 50.8 L197.9 60.1 H205.8 Z" fill="#d89a30"/><path d="M53.8 55.4 L45.6 74.9 H61.9 Z" fill="#d89a30"/><path d="M112.8 82.1 L107.6 94.7 H118.1 Z" fill="#e0a83a"/><path d="M85.8 36.4 L80.1 50.1 H91.6 Z" fill="#a86018"/><path d="M108.7 59.4 L103.7 71.2 H113.7 Z" fill="#c88a26"/><path d="M1.4 57.6 L-6.1 75.4 H8.8 Z" fill="#4a4424"/><path d="M3.5 30.7 L-0.1 39.5 H7.2 Z" fill="#c8841c"/><path d="M49.0 82.5 L41.1 101.3 H56.9 Z" fill="#4a3a1c"/><path d="M196.1 66.5 L191.4 77.7 H200.8 Z" fill="#a86018"/><path d="M189.1 39.4 L182.1 56.1 H196.1 Z" fill="#d89a30"/><path d="M0.1 44.8 L-5.7 58.5 H5.8 Z" fill="#c88a26"/><path d="M195.3 46.5 L190.7 57.5 H199.9 Z" fill="#4a4424"/><path d="M166.1 28.4 L160.2 42.3 H172.0 Z" fill="#c8841c"/><path d="M163.5 78.5 L156.0 96.4 H171.0 Z" fill="#b86a18"/><path d="M63.8 53.6 L58.7 66.0 H69.0 Z" fill="#d89a30"/><path d="M102.5 56.0 L98.3 65.9 H106.7 Z" fill="#4a4424"/><path d="M8.6 30.9 L2.4 45.6 H14.7 Z" fill="#a86018"/><path d="M28.7 59.7 L24.9 69.0 H32.6 Z" fill="#d89a30"/><path d="M50.6 36.8 L46.8 46.0 H54.5 Z" fill="#c88a26"/><path d="M202.6 97.5 L198.3 107.6 H206.8 Z" fill="#6a4418"/><path d="M182.2 34.9 L176.1 49.3 H188.2 Z" fill="#d89a30"/><path d="M158.7 42.5 L154.0 53.9 H163.5 Z" fill="#e0a83a"/><path d="M73.3 82.3 L69.0 92.7 H77.7 Z" fill="#3a2a14"/><path d="M27.2 91.8 L20.9 106.8 H33.5 Z" fill="#4a3a1c"/><path d="M203.4 56.4 L198.9 67.2 H207.9 Z" fill="#d89a30"/><path d="M132.2 99.3 L128.3 108.5 H136.1 Z" fill="#c88a26"/><path d="M43.5 61.7 L38.3 74.2 H48.8 Z" fill="#e0a83a"/><path d="M43.9 34.1 L37.5 49.3 H50.3 Z" fill="#3a3620"/><path d="M190.3 45.7 L182.6 64.1 H198.1 Z" fill="#c88a26"/><path d="M121.6 83.0 L114.9 99.0 H128.3 Z" fill="#6a4418"/><path d="M144.0 48.6 L140.5 57.0 H147.6 Z" fill="#a86018"/><path d="M24.7 43.9 L20.0 54.9 H29.3 Z" fill="#3a3620"/><path d="M166.1 85.0 L160.7 97.9 H171.5 Z" fill="#4a3a1c"/><path d="M11.4 30.9 L5.5 44.9 H17.2 Z" fill="#c88a26"/><path d="M8.3 35.7 L2.9 48.5 H13.6 Z" fill="#8a5a1a"/><path d="M27.5 67.2 L20.8 83.1 H34.1 Z" fill="#4a4424"/><path d="M141.0 53.6 L136.2 65.0 H145.8 Z" fill="#e0a83a"/><path d="M82.7 36.4 L75.6 53.4 H89.9 Z" fill="#a86018"/><path d="M82.0 34.1 L74.7 51.3 H89.2 Z" fill="#a86018"/><path d="M130.3 53.2 L124.9 66.0 H135.7 Z" fill="#c8841c"/><path d="M86.2 43.6 L82.2 53.0 H90.1 Z" fill="#d89a30"/><path d="M80.3 92.1 L74.6 105.7 H86.0 Z" fill="#3a2a14"/><path d="M110.8 73.5 L102.9 92.4 H118.8 Z" fill="#d89a30"/><path d="M115.3 94.6 L108.2 111.4 H122.4 Z" fill="#4a3a1c"/><path d="M29.0 41.8 L25.3 50.6 H32.7 Z" fill="#4a4424"/><path d="M98.0 87.1 L89.8 106.7 H106.2 Z" fill="#3a2a14"/><path d="M199.9 54.5 L196.2 63.1 H203.5 Z" fill="#4a4424"/><path d="M13.1 79.5 L6.3 95.8 H20.0 Z" fill="#b86a18"/><path d="M174.9 68.2 L168.4 83.6 H181.3 Z" fill="#3a3620"/><path d="M169.1 32.1 L164.7 42.8 H173.6 Z" fill="#4a4424"/><path d="M192.1 26.8 L186.9 39.1 H197.3 Z" fill="#b86a18"/><path d="M46.9 81.0 L39.0 99.7 H54.8 Z" fill="#c8841c"/><path d="M171.9 72.6 L165.2 88.6 H178.6 Z" fill="#a86018"/><path d="M19.7 71.6 L13.6 86.2 H25.9 Z" fill="#e0a83a"/><path d="M131.3 46.7 L126.7 57.7 H135.9 Z" fill="#4a4424"/><path d="M133.4 57.2 L127.8 70.5 H138.9 Z" fill="#c8841c"/><path d="M-4.3 99.0 L-10.0 112.6 H1.4 Z" fill="#c88a26"/><path d="M158.8 55.9 L154.5 66.1 H163.1 Z" fill="#c88a26"/><path d="M79.1 37.3 L73.9 49.6 H84.2 Z" fill="#a86018"/><path d="M14.3 60.3 L8.3 74.4 H20.2 Z" fill="#c8841c"/><path d="M3.5 37.6 L-4.5 56.6 H11.5 Z" fill="#a86018"/><path d="M158.3 60.3 L154.7 68.9 H161.9 Z" fill="#8a5a1a"/><path d="M182.9 70.4 L175.6 87.8 H190.2 Z" fill="#c8841c"/><path d="M175.0 99.7 L167.9 116.5 H182.0 Z" fill="#4a3a1c"/><path d="M55.5 87.0 L48.1 104.6 H62.8 Z" fill="#4a3a1c"/><path d="M123.2 43.4 L118.2 55.3 H128.2 Z" fill="#e0a83a"/><path d="M185.1 53.5 L180.4 64.5 H189.7 Z" fill="#c88a26"/><path d="M38.7 48.6 L32.8 62.7 H44.7 Z" fill="#a86018"/><path d="M73.2 45.8 L67.8 58.7 H78.6 Z" fill="#e0a83a"/><path d="M137.7 91.8 L133.5 101.9 H141.9 Z" fill="#6a4418"/><path d="M5.2 89.8 L-3.0 109.4 H13.4 Z" fill="#c88a26"/><path d="M116.8 91.2 L112.9 100.5 H120.7 Z" fill="#8a5a1a"/><path d="M77.8 86.4 L73.1 97.6 H82.5 Z" fill="#a86018"/><path d="M70.7 84.1 L65.1 97.4 H76.2 Z" fill="#b86a18"/><path d="M196.2 38.5 L190.2 52.7 H202.1 Z" fill="#e0a83a"/><path d="M129.2 98.8 L122.9 113.8 H135.6 Z" fill="#a86018"/><path d="M151.9 37.5 L147.1 49.0 H156.7 Z" fill="#4a4424"/><path d="M82.7 57.4 L79.1 65.9 H86.3 Z" fill="#c88a26"/><path d="M42.7 75.9 L39.3 84.2 H46.2 Z" fill="#c8841c"/><path d="M58.8 67.3 L52.7 81.8 H64.8 Z" fill="#4a4424"/><path d="M117.6 69.3 L113.2 79.7 H121.9 Z" fill="#c88a26"/><path d="M28.3 30.7 L20.9 48.3 H35.7 Z" fill="#b86a18"/><path d="M89.7 37.6 L85.6 47.4 H93.8 Z" fill="#e0a83a"/><path d="M79.4 50.5 L76.0 58.7 H82.8 Z" fill="#8a5a1a"/><path d="M182.5 65.5 L176.2 80.4 H188.7 Z" fill="#8a5a1a"/><path d="M149.0 40.0 L141.1 58.8 H157.0 Z" fill="#c8841c"/><path d="M7.9 30.3 L3.6 40.5 H12.2 Z" fill="#b86a18"/><path d="M7.3 84.2 L3.8 92.3 H10.7 Z" fill="#8a5a1a"/><path d="M36.4 59.0 L30.5 73.3 H42.4 Z" fill="#8a5a1a"/><path d="M131.0 55.0 L124.5 70.4 H137.4 Z" fill="#8a5a1a"/><path d="M60.0 52.1 L56.4 60.7 H63.6 Z" fill="#c88a26"/><path d="M145.2 21.3 L137.6 39.4 H152.8 Z" fill="#c88a26"/><path d="M11.9 75.4 L7.7 85.5 H16.1 Z" fill="#6a4418"/><path d="M3.2 52.3 L-4.0 69.3 H10.3 Z" fill="#e0a83a"/><path d="M144.5 41.9 L138.3 56.6 H150.6 Z" fill="#4a4424"/><path d="M139.0 93.5 L130.7 113.2 H147.3 Z" fill="#e0a83a"/><path d="M197.7 31.4 L189.9 49.9 H205.5 Z" fill="#c8841c"/><path d="M30.7 93.3 L23.0 111.4 H38.3 Z" fill="#3a3620"/><path d="M151.7 46.0 L143.9 64.5 H159.5 Z" fill="#a86018"/><path d="M121.3 53.2 L113.6 71.4 H128.9 Z" fill="#8a5a1a"/><path d="M93.6 89.4 L86.7 105.7 H100.5 Z" fill="#6a4418"/><path d="M44.1 92.0 L36.8 109.5 H51.4 Z" fill="#4a4424"/><path d="M11.3 93.6 L7.2 103.4 H15.4 Z" fill="#6a4418"/><path d="M190.1 43.4 L186.0 53.1 H194.2 Z" fill="#c8841c"/><path d="M1.5 38.0 L-5.1 53.8 H8.1 Z" fill="#c8841c"/><path d="M141.4 79.3 L137.7 88.1 H145.1 Z" fill="#6a4418"/><path d="M182.2 20.5 L174.4 38.9 H189.9 Z" fill="#4a4424"/><path d="M17.5 43.6 L13.6 53.0 H21.4 Z" fill="#c8841c"/><path d="M194.3 92.3 L187.2 109.3 H201.5 Z" fill="#d89a30"/><path d="M127.6 45.5 L123.8 54.7 H131.5 Z" fill="#d89a30"/><path d="M161.3 71.1 L156.5 82.6 H166.2 Z" fill="#a86018"/><path d="M84.0 34.4 L79.3 45.5 H88.6 Z" fill="#e0a83a"/><path d="M5.2 82.8 L-2.8 101.7 H13.1 Z" fill="#4a3a1c"/><path d="M124.8 26.4 L119.4 39.3 H130.3 Z" fill="#4a4424"/><path d="M103.9 34.5 L98.2 48.1 H109.6 Z" fill="#c8841c"/><path d="M108.0 42.6 L100.2 60.9 H115.7 Z" fill="#d89a30"/><path d="M115.7 46.9 L110.1 60.1 H121.2 Z" fill="#8a5a1a"/><path d="M37.4 83.4 L29.1 103.1 H45.7 Z" fill="#3a2a14"/><path d="M98.2 86.6 L93.9 96.8 H102.5 Z" fill="#c88a26"/><path d="M196.0 57.6 L189.7 72.6 H202.3 Z" fill="#b86a18"/><path d="M54.6 46.0 L47.7 62.4 H61.5 Z" fill="#c88a26"/><path d="M29.8 95.7 L22.6 112.9 H37.0 Z" fill="#c88a26"/><path d="M141.4 83.2 L134.9 98.8 H147.9 Z" fill="#4a3a1c"/><path d="M182.3 78.3 L176.8 91.4 H187.8 Z" fill="#4a3a1c"/><path d="M50.3 93.2 L44.4 107.2 H56.2 Z" fill="#4a4424"/><path d="M127.5 95.7 L123.5 105.2 H131.5 Z" fill="#4a3a1c"/><path d="M104.6 90.4 L98.9 103.8 H110.2 Z" fill="#8a5a1a"/><path d="M30.6 60.6 L23.3 77.9 H37.9 Z" fill="#3a3620"/><path d="M21.5 62.0 L13.7 80.6 H29.3 Z" fill="#3a3620"/><path d="M101.6 47.1 L94.5 64.1 H108.8 Z" fill="#b86a18"/><path d="M146.9 98.0 L139.9 114.7 H153.9 Z" fill="#3a2a14"/><path d="M63.9 44.7 L55.6 64.4 H72.2 Z" fill="#d89a30"/><path d="M29.6 76.0 L25.2 86.3 H33.9 Z" fill="#b86a18"/><path d="M161.9 78.2 L156.4 91.4 H167.5 Z" fill="#3a2a14"/><path d="M54.0 92.1 L48.3 105.7 H59.7 Z" fill="#4a3a1c"/><path d="M140.6 60.8 L134.1 76.4 H147.2 Z" fill="#c88a26"/><path d="M-0.4 46.5 L-7.4 63.4 H6.7 Z" fill="#c8841c"/><path d="M150.6 92.6 L145.1 105.8 H156.1 Z" fill="#4a4424"/><path d="M135.3 73.0 L127.5 91.5 H143.0 Z" fill="#3a3620"/><path d="M137.7 72.0 L132.1 85.5 H143.4 Z" fill="#a86018"/><path d="M49.6 79.3 L41.7 98.1 H57.4 Z" fill="#3a3620"/><path d="M144.8 70.7 L140.1 81.7 H149.4 Z" fill="#4a4424"/><path d="M96.4 35.1 L88.7 53.4 H104.1 Z" fill="#8a5a1a"/><path d="M136.8 94.6 L132.5 104.8 H141.1 Z" fill="#a86018"/><path d="M76.6 65.6 L68.4 85.3 H84.9 Z" fill="#c8841c"/><path d="M47.8 45.9 L40.8 62.5 H54.7 Z" fill="#3a3620"/><path d="M104.0 34.7 L97.8 49.6 H110.3 Z" fill="#8a5a1a"/><path d="M38.0 63.4 L34.6 71.6 H41.5 Z" fill="#a86018"/><path d="M104.6 57.1 L96.4 76.5 H112.7 Z" fill="#3a3620"/><path d="M203.0 27.8 L197.0 42.0 H208.9 Z" fill="#d89a30"/><path d="M148.1 69.2 L141.5 84.9 H154.7 Z" fill="#e0a83a"/><path d="M52.6 58.7 L49.2 66.8 H56.0 Z" fill="#4a4424"/><path d="M187.2 68.1 L180.5 84.2 H194.0 Z" fill="#e0a83a"/><path d="M17.9 50.6 L12.6 63.4 H23.3 Z" fill="#8a5a1a"/><path d="M199.0 99.5 L190.8 119.0 H207.2 Z" fill="#3a2a14"/><path d="M190.2 19.5 L182.8 37.1 H197.6 Z" fill="#3a3620"/><path d="M93.5 70.9 L89.0 81.6 H98.0 Z" fill="#b86a18"/><path d="M69.2 75.5 L61.7 93.3 H76.6 Z" fill="#4a3a1c"/><path d="M154.6 71.7 L147.3 89.1 H161.9 Z" fill="#c88a26"/><path d="M69.5 89.9 L64.8 101.1 H74.2 Z" fill="#4a4424"/><path d="M201.4 71.7 L195.6 85.4 H207.2 Z" fill="#e0a83a"/><path d="M70.2 76.6 L65.2 88.4 H75.1 Z" fill="#6a4418"/><path d="M12.9 92.7 L8.8 102.5 H17.1 Z" fill="#e0a83a"/><path d="M7.0 87.7 L-0.9 106.6 H14.9 Z" fill="#b86a18"/><path d="M67.5 71.6 L60.8 87.5 H74.2 Z" fill="#3a3620"/><path d="M194.9 70.0 L190.3 81.0 H199.5 Z" fill="#d89a30"/><path d="M116.5 89.1 L112.2 99.3 H120.8 Z" fill="#3a2a14"/><path d="M38.8 58.4 L32.7 72.8 H44.8 Z" fill="#d89a30"/><path d="M135.4 91.8 L128.0 109.2 H142.7 Z" fill="#6a4418"/><path d="M39.8 35.9 L32.2 53.9 H47.3 Z" fill="#d89a30"/><path d="M111.6 45.7 L107.0 56.5 H116.1 Z" fill="#b86a18"/><path d="M94.4 70.6 L88.6 84.4 H100.2 Z" fill="#b86a18"/><path d="M142.1 40.7 L137.9 50.7 H146.3 Z" fill="#c8841c"/><path d="M28.7 52.3 L21.8 68.6 H35.5 Z" fill="#c88a26"/><path d="M134.7 87.6 L129.5 100.1 H140.0 Z" fill="#4a4424"/><path d="M136.9 36.2 L131.8 48.5 H142.1 Z" fill="#c8841c"/><path d="M-0.7 31.3 L-7.8 48.1 H6.4 Z" fill="#a86018"/><path d="M164.8 25.4 L159.0 39.2 H170.6 Z" fill="#b86a18"/><path d="M2.1 79.7 L-4.4 95.2 H8.6 Z" fill="#6a4418"/><path d="M71.9 64.4 L65.9 78.7 H77.9 Z" fill="#3a3620"/><path d="M54.7 54.8 L50.0 65.8 H59.3 Z" fill="#c8841c"/><path d="M168.6 41.3 L161.1 59.3 H176.1 Z" fill="#4a4424"/><path d="M65.1 98.9 L57.3 117.4 H72.8 Z" fill="#a86018"/><path d="M132.5 83.9 L127.4 95.9 H137.5 Z" fill="#a86018"/><path d="M21.8 98.1 L18.0 107.1 H25.6 Z" fill="#6a4418"/><path d="M181.0 61.4 L177.4 70.0 H184.6 Z" fill="#e0a83a"/><path d="M17.8 32.4 L10.3 50.2 H25.3 Z" fill="#c88a26"/><path d="M122.8 74.1 L115.5 91.6 H130.2 Z" fill="#8a5a1a"/><path d="M123.5 71.0 L116.9 86.5 H130.0 Z" fill="#d89a30"/><path d="M39.6 76.8 L34.0 90.3 H45.3 Z" fill="#3a2a14"/><path d="M177.5 51.2 L173.7 60.4 H181.4 Z" fill="#c8841c"/><path d="M72.5 88.0 L65.1 105.4 H79.8 Z" fill="#8a5a1a"/><path d="M176.1 31.4 L172.6 39.8 H179.6 Z" fill="#c8841c"/><path d="M85.4 76.0 L77.4 95.2 H93.5 Z" fill="#6a4418"/><path d="M3.3 36.7 L-4.2 54.5 H10.7 Z" fill="#4a4424"/><path d="M88.8 34.3 L83.4 46.9 H94.1 Z" fill="#b86a18"/><path d="M94.8 61.0 L91.0 70.3 H98.7 Z" fill="#c88a26"/><path d="M39.6 40.9 L36.1 49.1 H43.0 Z" fill="#c8841c"/><path d="M-3.0 76.1 L-11.4 96.0 H5.3 Z" fill="#3a2a14"/><path d="M22.1 30.6 L15.1 47.2 H29.1 Z" fill="#3a3620"/><path d="M89.7 83.0 L81.7 102.0 H97.7 Z" fill="#a86018"/><path d="M144.8 88.6 L137.8 105.3 H151.9 Z" fill="#6a4418"/><path d="M143.9 57.4 L135.9 76.6 H152.0 Z" fill="#e0a83a"/><path d="M186.8 18.6 L183.3 27.0 H190.4 Z" fill="#c8841c"/><path d="M-1.9 74.8 L-9.4 92.6 H5.6 Z" fill="#d89a30"/><path d="M76.7 53.7 L70.3 68.9 H83.1 Z" fill="#c88a26"/><path d="M122.9 48.3 L114.7 67.7 H131.0 Z" fill="#c88a26"/><path d="M93.7 44.7 L85.4 64.3 H101.9 Z" fill="#d89a30"/><path d="M71.3 76.0 L64.8 91.5 H77.8 Z" fill="#4a3a1c"/><path d="M193.4 81.3 L187.2 96.1 H199.7 Z" fill="#6a4418"/><path d="M199.5 73.9 L192.0 91.8 H207.1 Z" fill="#a86018"/><path d="M177.6 76.8 L174.2 85.0 H181.0 Z" fill="#b86a18"/><path d="M59.8 60.9 L52.0 79.6 H67.6 Z" fill="#4a4424"/><path d="M76.3 57.9 L69.1 75.2 H83.6 Z" fill="#3a3620"/><path d="M164.6 41.0 L161.2 49.0 H167.9 Z" fill="#e0a83a"/><path d="M51.3 41.9 L43.3 61.0 H59.3 Z" fill="#c8841c"/><path d="M55.6 41.0 L47.7 59.7 H63.4 Z" fill="#b86a18"/><path d="M52.5 89.8 L45.1 107.4 H59.9 Z" fill="#3a2a14"/><path d="M108.4 62.2 L103.1 74.8 H113.7 Z" fill="#3a3620"/><path d="M60.0 35.5 L54.6 48.3 H65.3 Z" fill="#3a3620"/><path d="M189.5 64.3 L186.1 72.4 H192.9 Z" fill="#4a4424"/><path d="M91.5 39.3 L84.1 57.0 H99.0 Z" fill="#d89a30"/><path d="M43.9 70.8 L36.0 89.6 H51.8 Z" fill="#8a5a1a"/><path d="M62.4 66.3 L58.0 76.7 H66.8 Z" fill="#3a3620"/><path d="M35.4 42.7 L28.5 59.2 H42.3 Z" fill="#a86018"/><path d="M116.4 52.2 L109.1 69.5 H123.6 Z" fill="#b86a18"/><path d="M46.7 94.6 L40.9 108.6 H52.6 Z" fill="#4a3a1c"/><path d="M160.3 31.1 L154.0 46.3 H166.7 Z" fill="#a86018"/><path d="M53.9 73.0 L50.1 82.1 H57.7 Z" fill="#3a3620"/><path d="M203.0 88.2 L197.2 102.0 H208.8 Z" fill="#4a3a1c"/><path d="M84.4 96.4 L77.2 113.6 H91.7 Z" fill="#3a2a14"/><path d="M66.2 99.6 L60.9 112.2 H71.4 Z" fill="#6a4418"/><path d="M72.6 80.1 L66.8 93.9 H78.4 Z" fill="#d89a30"/><path d="M129.4 94.0 L122.4 110.5 H136.3 Z" fill="#6a4418"/><path d="M44.0 36.9 L36.0 55.9 H52.0 Z" fill="#8a5a1a"/><path d="M77.6 62.8 L73.4 72.8 H81.7 Z" fill="#3a3620"/><path d="M203.3 31.1 L199.7 39.6 H206.8 Z" fill="#e0a83a"/><path d="M192.6 18.3 L186.5 33.0 H198.8 Z" fill="#c8841c"/><path d="M170.8 20.6 L163.5 38.0 H178.1 Z" fill="#c88a26"/><path d="M6.7 38.8 L-0.5 55.8 H13.9 Z" fill="#3a3620"/><path d="M137.1 45.3 L130.8 60.4 H143.5 Z" fill="#d89a30"/><path d="M93.9 58.3 L88.5 71.0 H99.2 Z" fill="#a86018"/><path d="M96.1 44.9 L91.5 55.8 H100.6 Z" fill="#b86a18"/><path d="M187.0 90.7 L181.3 104.3 H192.7 Z" fill="#3a3620"/><path d="M28.0 88.2 L24.2 97.2 H31.7 Z" fill="#a86018"/><path d="M24.4 61.0 L20.5 70.2 H28.2 Z" fill="#4a4424"/><path d="M171.9 69.0 L166.2 82.4 H177.5 Z" fill="#a86018"/><path d="M62.7 47.7 L58.8 57.1 H66.7 Z" fill="#a86018"/><path d="M25.0 45.1 L21.3 53.8 H28.6 Z" fill="#c88a26"/><path d="M111.2 36.9 L103.5 55.3 H119.0 Z" fill="#e0a83a"/><path d="M82.8 49.5 L79.3 57.8 H86.3 Z" fill="#e0a83a"/><path d="M65.2 43.3 L59.4 57.2 H71.1 Z" fill="#a86018"/><path d="M90.8 65.6 L86.7 75.4 H94.9 Z" fill="#8a5a1a"/><path d="M6.9 92.5 L0.2 108.5 H13.7 Z" fill="#3a3620"/><path d="M170.4 26.7 L163.2 43.7 H177.6 Z" fill="#a86018"/><path d="M85.7 50.6 L81.2 61.5 H90.3 Z" fill="#3a3620"/><path d="M15.5 49.5 L7.6 68.3 H23.4 Z" fill="#c8841c"/><path d="M169.8 98.2 L165.7 107.9 H173.9 Z" fill="#6a4418"/><path d="M66.6 41.5 L63.2 49.5 H70.0 Z" fill="#8a5a1a"/><path d="M55.1 56.0 L51.6 64.5 H58.7 Z" fill="#4a4424"/><path d="M40.8 70.2 L36.8 79.8 H44.9 Z" fill="#b86a18"/><path d="M104.5 44.0 L100.3 54.1 H108.8 Z" fill="#d89a30"/><path d="M169.1 90.8 L162.0 107.6 H176.1 Z" fill="#3a2a14"/><path d="M123.6 77.9 L116.2 95.6 H131.1 Z" fill="#3a2a14"/><path d="M140.4 62.3 L132.8 80.4 H148.0 Z" fill="#c8841c"/><path d="M103.9 52.6 L99.1 64.0 H108.7 Z" fill="#c88a26"/><path d="M14.0 58.0 L6.8 75.1 H21.2 Z" fill="#b86a18"/><path d="M178.1 38.0 L173.8 48.2 H182.4 Z" fill="#a86018"/><path d="M2.7 78.6 L-3.6 93.5 H9.0 Z" fill="#4a3a1c"/><path d="M198.4 18.5 L193.3 30.8 H203.6 Z" fill="#3a3620"/><path d="M166.5 88.9 L161.5 100.7 H171.5 Z" fill="#4a4424"/><path d="M183.6 39.5 L179.7 48.8 H187.5 Z" fill="#c88a26"/><path d="M88.8 35.0 L81.3 52.7 H96.2 Z" fill="#b86a18"/><path d="M-0.7 97.7 L-5.1 108.3 H3.8 Z" fill="#4a3a1c"/><path d="M47.6 87.4 L44.1 95.7 H51.1 Z" fill="#d89a30"/><path d="M150.1 40.9 L142.6 58.9 H157.7 Z" fill="#c88a26"/><path d="M104.8 78.4 L100.9 87.6 H108.7 Z" fill="#d89a30"/><path d="M4.5 37.1 L-1.4 51.0 H10.3 Z" fill="#8a5a1a"/><path d="M154.9 28.1 L150.9 37.6 H158.9 Z" fill="#b86a18"/><path d="M108.7 43.3 L104.2 54.0 H113.2 Z" fill="#c88a26"/><path d="M151.8 32.9 L144.3 50.8 H159.3 Z" fill="#4a4424"/><path d="M140.7 68.4 L134.3 83.6 H147.1 Z" fill="#c8841c"/><path d="M78.1 96.0 L70.8 113.4 H85.4 Z" fill="#4a3a1c"/><path d="M145.3 87.6 L139.1 102.3 H151.5 Z" fill="#a86018"/><path d="M173.0 20.8 L167.0 35.0 H179.0 Z" fill="#a86018"/><path d="M47.3 60.0 L40.8 75.6 H53.9 Z" fill="#a86018"/><path d="M17.9 42.4 L12.9 54.3 H22.9 Z" fill="#3a3620"/><path d="M101.0 29.3 L96.9 39.0 H105.1 Z" fill="#4a4424"/><path d="M158.1 94.9 L151.5 110.5 H164.6 Z" fill="#6a4418"/><path d="M125.4 93.8 L118.9 109.2 H131.9 Z" fill="#8a5a1a"/><path d="M2.5 35.4 L-1.5 44.8 H6.5 Z" fill="#c8841c"/><path d="M86.1 96.7 L81.3 108.2 H90.9 Z" fill="#3a2a14"/><path d="M20.3 71.3 L12.1 90.8 H28.5 Z" fill="#8a5a1a"/><path d="M184.3 21.7 L178.0 36.8 H190.6 Z" fill="#b86a18"/><path d="M87.4 67.4 L79.6 86.0 H95.2 Z" fill="#4a4424"/><path d="M116.2 45.8 L109.2 62.7 H123.3 Z" fill="#8a5a1a"/><path d="M55.3 62.5 L48.4 78.8 H62.2 Z" fill="#3a3620"/><path d="M131.6 38.5 L124.6 55.0 H138.5 Z" fill="#c88a26"/><path d="M182.3 40.7 L176.5 54.4 H188.0 Z" fill="#e0a83a"/><path d="M1.5 52.1 L-2.8 62.3 H5.8 Z" fill="#8a5a1a"/><path d="M75.5 72.0 L72.0 80.2 H78.9 Z" fill="#a86018"/><path d="M29.1 96.6 L24.1 108.5 H34.1 Z" fill="#4a3a1c"/><path d="M179.5 33.6 L175.8 42.3 H183.1 Z" fill="#c8841c"/><path d="M28.3 34.4 L20.5 52.8 H36.1 Z" fill="#c88a26"/><path d="M133.1 62.7 L125.6 80.7 H140.7 Z" fill="#a86018"/><path d="M149.4 28.8 L144.9 39.5 H153.9 Z" fill="#b86a18"/><path d="M82.5 77.8 L78.5 87.4 H86.6 Z" fill="#3a3620"/><path d="M173.5 85.0 L167.5 99.2 H179.5 Z" fill="#6a4418"/><path d="M143.8 93.3 L139.8 102.8 H147.8 Z" fill="#6a4418"/><path d="M118.0 62.4 L109.8 82.0 H126.2 Z" fill="#b86a18"/><path d="M82.8 85.5 L75.0 104.0 H90.5 Z" fill="#4a3a1c"/><path d="M140.5 44.1 L135.3 56.4 H145.6 Z" fill="#a86018"/><path d="M77.0 70.0 L71.7 82.7 H82.3 Z" fill="#a86018"/><path d="M-3.6 81.6 L-11.9 101.5 H4.8 Z" fill="#3a2a14"/><path d="M107.7 85.6 L102.2 98.8 H113.3 Z" fill="#4a4424"/><path d="M13.5 94.3 L8.5 106.2 H18.5 Z" fill="#3a3620"/><path d="M37.9 60.0 L30.0 78.9 H45.9 Z" fill="#c8841c"/><path d="M0.4 46.5 L-7.5 65.2 H8.2 Z" fill="#e0a83a"/><path d="M188.3 80.5 L182.2 95.0 H194.3 Z" fill="#4a4424"/><path d="M103.6 77.2 L98.3 89.8 H108.9 Z" fill="#6a4418"/><path d="M68.7 96.5 L62.0 112.6 H75.5 Z" fill="#4a3a1c"/><path d="M73.6 59.5 L67.4 74.2 H79.8 Z" fill="#b86a18"/><path d="M179.8 97.0 L174.0 110.8 H185.6 Z" fill="#c88a26"/><path d="M183.8 64.8 L177.0 81.1 H190.7 Z" fill="#d89a30"/><path d="M30.9 52.2 L22.6 71.9 H39.1 Z" fill="#e0a83a"/><path d="M102.6 35.6 L94.8 54.3 H110.5 Z" fill="#a86018"/><path d="M167.3 99.2 L159.5 117.9 H175.2 Z" fill="#4a4424"/><path d="M105.1 86.6 L100.6 97.1 H109.5 Z" fill="#3a2a14"/><path d="M127.3 69.7 L122.2 81.9 H132.5 Z" fill="#c8841c"/><path d="M140.3 22.4 L136.9 30.4 H143.6 Z" fill="#8a5a1a"/><path d="M-4.2 49.7 L-11.8 67.9 H3.4 Z" fill="#c8841c"/><path d="M135.3 37.6 L129.4 51.6 H141.2 Z" fill="#8a5a1a"/><path d="M114.1 90.4 L106.2 109.2 H121.9 Z" fill="#8a5a1a"/><path d="M115.6 56.1 L111.7 65.6 H119.6 Z" fill="#b86a18"/><path d="M103.9 64.4 L100.4 72.7 H107.4 Z" fill="#d89a30"/><path d="M30.8 66.5 L23.3 84.4 H38.3 Z" fill="#4a4424"/><path d="M164.4 22.8 L161.0 31.0 H167.8 Z" fill="#a86018"/><path d="M25.2 46.3 L20.5 57.6 H30.0 Z" fill="#c8841c"/><path d="M51.0 37.9 L43.1 56.8 H58.9 Z" fill="#d89a30"/><path d="M68.3 62.6 L63.0 75.3 H73.6 Z" fill="#c8841c"/><path d="M41.2 58.0 L34.0 75.2 H48.4 Z" fill="#c8841c"/><path d="M87.3 74.6 L82.7 85.6 H91.9 Z" fill="#c8841c"/><path d="M28.5 71.0 L24.2 81.1 H32.7 Z" fill="#c8841c"/><rect y="84" width="200" height="16" fill="#1e160c" opacity="0.3"/></svg><span class="badge dark">In progress</span></div><div class="title">Autumn is Coming</div><div class="sub" style="top:133px;color:#777">Expiration: 10/25/2025</div><div class="lang">4 courses</div><div class="div"></div><div class="foot"><span class="ficon"><svg width="12" height="12" viewBox="0 0 12 12"><rect x="3.1" y="0.6" width="8.3" height="8.3" rx="0.8" fill="none" stroke="#555" stroke-width="1.2"/><path d="M0.6 3 V11.4 H9" fill="none" stroke="#555" stroke-width="1.2"/></svg></span><span class="ftxt">Learning Plan</span></div></div><div class="card" style="left:1259px;top:155px"><div class="img"><svg width="200" height="100" viewBox="0 0 200 100">
<rect width="200" height="100" fill="#24282c"/>
<rect x="100" y="0" width="30" height="60" fill="#30363c"/>
<rect x="140" y="24" width="25" height="26" fill="#485056"/>
<path d="M0 12 Q14 4 28 14 L32 46 L26 60 L40 100 H0 Z" fill="#363638"/>
<path d="M2 6 Q16 0 28 12 L24 44 L6 44 Z" fill="#524c46"/>
<path d="M22 34 Q36 28 52 36 L64 66 L60 92 L30 92 Z" fill="#a29c94"/>
<path d="M26 10 Q36 2 48 10 L48 30 L32 34 Z" fill="#5e4a3c"/>
<path d="M0 50 L30 62 L40 100 H0 Z" fill="#1c2024"/>
<path d="M58 30 Q78 24 92 34 L96 72 L62 74 Z" fill="#182030"/>
<path d="M76 30 L84 38 L90 30 L88 62 L80 62 Z" fill="#a29e98"/>
<path d="M74 6 Q84 0 94 8 L94 28 L78 30 Z" fill="#54402e"/>
<path d="M42 84 Q80 70 122 74 L120 100 H44 Z" fill="#6c6a64"/>
<path d="M60 86 L100 80 L110 92 L66 98 Z" fill="#85837c"/>
<rect x="48" y="68" width="9" height="14" fill="#141414"/>
<rect x="90" y="72" width="10" height="16" fill="#141414"/>
<path d="M120 58 Q160 52 200 58 V100 H120 Z" fill="#141414"/>
<path d="M156 30 Q176 24 200 30 V58 L150 52 Z" fill="#22252a"/>
<path d="M172 34 L196 36 V58 L174 58 Z" fill="#9c9892"/>
<path d="M164 22 Q174 16 184 24 L182 36 L168 36 Z" fill="#3a2c22"/>
</svg><div class="lock"><svg width="16" height="20" viewBox="0 0 16 20"><path d="M3.5 8 V5.5 A4.5 4.5 0 0 1 12.5 5.5 V8" fill="none" stroke="#fff" stroke-width="2"/><rect x="1" y="8" width="14" height="11" rx="1.5" fill="#fff"/><circle cx="8" cy="13.5" r="1.6" fill="#333"/></svg></div><span class="badge dark">In progress</span></div><div class="title">Boosting Your Confidence<br>in High-Stakes Situations</div><div class="sub" style="top:149px;color:#777">Expired</div><div class="lang"><span style="position:relative;top:-3px"><svg style="vertical-align:-2.5px;margin-right:6px;margin-left:1.5px" width="13" height="13" viewBox="0 0 13 13"><circle cx="6.5" cy="6.5" r="5.7" fill="none" stroke="#555" stroke-width="1.1"/><ellipse cx="6.5" cy="6.5" rx="2.4" ry="5.7" fill="none" stroke="#555" stroke-width="1"/><path d="M0.8 4.6 H12.2 M0.8 8.4 H12.2 M6.5 0.8 V12.2" stroke="#555" stroke-width="1"/></svg>EN <span style="color:#0b64d4;text-decoration:underline;font-size:12.5px">+2</span></span></div><div class="div"></div><div class="foot"><span class="ficon"><svg width="13" height="11" viewBox="0 0 13 11"><rect x="0.6" y="0.6" width="11.8" height="8.4" rx="1" fill="none" stroke="#555" stroke-width="1.2"/><path d="M5 2.8 L8.4 4.8 L5 6.8 Z" fill="#444"/><rect x="4" y="9.6" width="5" height="1.3" fill="#444"/></svg></span><span class="ftxt">E-learning</span><span class="kebab"><svg width="4" height="14" viewBox="0 0 4 14"><circle cx="2" cy="2" r="1.55" fill="#4a4a4a"/><circle cx="2" cy="7" r="1.55" fill="#4a4a4a"/><circle cx="2" cy="12" r="1.55" fill="#4a4a4a"/></svg></span></div></div><div class="card" style="left:148px;top:531px"><div class="img"><svg width="200" height="100" viewBox="0 0 200 100">
<rect width="200" height="100" fill="#ececf0"/>
<circle cx="135" cy="35" r="55" fill="#f4f4f8"/>
<path d="M0 28 H14 V14 L46 36 L14 58 V44 H0 Z" fill="#d6d6da"/>
<path d="M75 16 Q140 20 200 34 V46 Q140 36 75 30 Z" fill="#dccfe4"/>
<path d="M135 10 Q170 -6 192 20 L192 44 H135 Z" fill="#a4a4a8"/>
<path d="M124 42 H192 V100 H128 V80 L120 70 L122 62 L126 56 Z" fill="#8c8c90"/>
<path d="M0 88 H72 V69 H120 V100 H0 Z" fill="#c2c2c6"/>
<circle cx="85" cy="21" r="14" fill="#9c4e9c"/>
<path d="M79 15 L91 27 M91 15 L79 27" stroke="#fff" stroke-width="2.4"/>
<circle cx="102" cy="47" r="12" fill="#7a3a98"/>
<circle cx="129" cy="26" r="10" fill="#8a5aaa"/>
<path d="M142 40 Q152 32 162 40 Z" fill="#8a5aaa"/>
<path d="M44 12 H53 V24 Q48 26 44 22 Z" fill="#6a4a30"/>
<rect x="43" y="11" width="10" height="5" fill="#1a1a1a"/>
<path d="M36 26 Q46 22 56 26 L72 22 L74 36 L58 36 L56 48 L32 48 Z" fill="#8a8a8e"/>
<rect x="66" y="17" width="8" height="7" fill="#6a3a88"/>
<rect x="67" y="31" width="9" height="7" fill="#6a3a88"/>
<path d="M32 48 H56 L50 84 L42 84 L44 64 L22 78 L14 86 L10 80 L34 60 Z" fill="#4a4a4e"/>
<rect x="160" y="61" width="32" height="36" fill="#4a2262"/>
<circle cx="177" cy="79" r="9" fill="#e8dcef"/>
<path d="M177 73 V79 L181 76" stroke="#4a2262" stroke-width="1.2" fill="none"/>
<rect x="158" y="96" width="40" height="4" fill="#666"/>
</svg><span class="badge green">Not started</span></div><div class="title">10 minutes, un livre :<br>Éliminer les barrières<br>mentales avec la PNL</div><div class="lang">FR</div><div class="div"></div><div class="foot"><span class="ficon"><svg width="13" height="11" viewBox="0 0 13 11"><rect x="0.6" y="0.6" width="11.8" height="8.4" rx="1" fill="none" stroke="#555" stroke-width="1.2"/><path d="M5 2.8 L8.4 4.8 L5 6.8 Z" fill="#444"/><rect x="4" y="9.6" width="5" height="1.3" fill="#444"/></svg></span><span class="ftxt">E-learning</span><span class="kebab"><svg width="4" height="14" viewBox="0 0 4 14"><circle cx="2" cy="2" r="1.55" fill="#4a4a4a"/><circle cx="2" cy="7" r="1.55" fill="#4a4a4a"/><circle cx="2" cy="12" r="1.55" fill="#4a4a4a"/></svg></span></div></div><div class="card" style="left:370.2px;top:531px"><div class="img"><svg width="200" height="100" viewBox="0 0 200 100">
<rect width="200" height="100" fill="#fff"/>
<path d="M0 0 H108 Q104 16 70 18 L68 18 L50 45 L58 18 Q14 18 0 8 Z" fill="#fafaf6" stroke="#222" stroke-width="0.8"/>
<rect x="4" y="0" width="8" height="5" fill="#c8702a"/><rect x="38" y="0" width="24" height="6" fill="#3a9a3a"/>
<rect x="40" y="8" width="8" height="9" fill="#e0d020"/><rect x="52" y="2" width="4" height="14" fill="#7a5a3a"/>
<rect x="58" y="6" width="6" height="10" fill="#e8a0d0"/><rect x="66" y="0" width="5" height="12" fill="#222"/>
<rect x="20" y="8" width="4" height="8" fill="#f0e060"/><circle cx="32" cy="12" r="3" fill="#333"/>
<path d="M114 0 H200 V18 Q170 20 140 16 Q118 10 114 0 Z" fill="#fafaf6" stroke="#222" stroke-width="0.8"/>
<rect x="128" y="0" width="30" height="4" fill="#aaa"/><rect x="160" y="0" width="10" height="5" fill="#e0c030"/><rect x="190" y="0" width="8" height="16" fill="#e02070"/>
<path d="M152 20 L162 34 L160 20 Z" fill="#fafaf6" stroke="#222" stroke-width="0.6"/>
<path d="M0 58 Q10 44 30 48 Q44 52 46 62 L50 58 Q56 64 50 72 Q56 82 42 90 L36 100 H0 Z" fill="#f2deb4" stroke="#222" stroke-width="0.8"/>
<path d="M0 60 Q4 44 24 46 Q40 46 44 56 Q30 52 16 58 L14 74 L0 86 Z" fill="#8a5a26"/>
<circle cx="27" cy="72" r="8.5" fill="#fff" stroke="#222" stroke-width="1.2"/><circle cx="31" cy="70" r="1.8" fill="#111"/>
<path d="M22 92 Q30 88 40 92 L38 100 H22 Z" fill="#8a4a30"/>
<path d="M108 100 L110 66 L128 64 L132 100 Z" fill="#9a8c68" stroke="#222" stroke-width="0.8"/>
<path d="M116 64 Q112 44 122 40 L130 30 L132 48 L140 52 Q140 64 128 64 Z" fill="#f2deb4" stroke="#222" stroke-width="0.8"/>
<path d="M130 48 L132 30 Q134 26 137 30 L137 50 Z" fill="#f2deb4" stroke="#222" stroke-width="0.8"/>
<path d="M172 34 Q190 24 200 34 V100 H150 Q144 90 146 78 Q150 72 154 70 L142 62 Q150 50 162 50 Q164 40 172 34 Z" fill="#f4e0b8" stroke="#222" stroke-width="0.8"/>
<path d="M172 36 Q184 26 200 32 V60 Q190 56 188 42 Z" fill="#6a6a6a"/>
<circle cx="172" cy="54" r="9" fill="#fff" stroke="#222" stroke-width="1.2"/><circle cx="170" cy="51" r="1.8" fill="#111"/>
<path d="M146 80 Q152 76 156 82 Q152 88 146 84 Z" fill="#8a4a30" stroke="#222" stroke-width="0.6"/>
</svg><span class="badge green">Not started</span></div><div class="title">A guide to strategic<br>conversation</div><div class="lang">EN</div><div class="div"></div><div class="foot"><span class="ficon"><svg width="13" height="11" viewBox="0 0 13 11"><rect x="0.6" y="0.6" width="11.8" height="8.4" rx="1" fill="none" stroke="#555" stroke-width="1.2"/><path d="M5 2.8 L8.4 4.8 L5 6.8 Z" fill="#444"/><rect x="4" y="9.6" width="5" height="1.3" fill="#444"/></svg></span><span class="ftxt">E-learning</span><span class="kebab"><svg width="4" height="14" viewBox="0 0 4 14"><circle cx="2" cy="2" r="1.55" fill="#4a4a4a"/><circle cx="2" cy="7" r="1.55" fill="#4a4a4a"/><circle cx="2" cy="12" r="1.55" fill="#4a4a4a"/></svg></span></div></div><div class="card" style="left:592.4px;top:531px"><div class="img"><div style="position:absolute;inset:0;background:#136a6b"></div><div class="lock"><svg width="16" height="20" viewBox="0 0 16 20"><path d="M3.5 8 V5.5 A4.5 4.5 0 0 1 12.5 5.5 V8" fill="none" stroke="#fff" stroke-width="2"/><rect x="1" y="8" width="14" height="11" rx="1.5" fill="#fff"/><circle cx="8" cy="13.5" r="1.6" fill="#333"/></svg></div><span class="badge green">Not started</span></div><div class="title">Adapting to change</div><div class="lang">IT</div><div class="div"></div><div class="foot"><span class="ficon"><svg width="13" height="11" viewBox="0 0 13 11"><rect x="0.6" y="0.6" width="11.8" height="8.4" rx="1" fill="none" stroke="#555" stroke-width="1.2"/><path d="M5 2.8 L8.4 4.8 L5 6.8 Z" fill="#444"/><rect x="4" y="9.6" width="5" height="1.3" fill="#444"/></svg></span><span class="ftxt">E-learning</span><span class="kebab"><svg width="4" height="14" viewBox="0 0 4 14"><circle cx="2" cy="2" r="1.55" fill="#4a4a4a"/><circle cx="2" cy="7" r="1.55" fill="#4a4a4a"/><circle cx="2" cy="12" r="1.55" fill="#4a4a4a"/></svg></span></div></div><div class="card" style="left:814.6px;top:531px"><div class="img"><svg width="200" height="100" viewBox="0 0 200 100">
<rect width="200" height="100" fill="#fff"/>
<rect x="95" y="0" width="78" height="31" fill="#2e2e30"/>
<rect x="97" y="0" width="72" height="28" fill="#9ac88a"/>
<circle cx="118" cy="10" r="12" fill="#e05a30"/>
<circle cx="118" cy="10" r="7" fill="#3a9ad0"/>
<circle cx="118" cy="10" r="3" fill="#6aa86a"/>
<path d="M136 0 Q148 8 160 0 Z" fill="#e05a30"/>
<rect x="126" y="31" width="18" height="6" fill="#3a3a3a"/>
<path d="M22 49 L100 42 L193 35 L191 43 L134 57 L22 55 Z" fill="#e2deb0" stroke="#555" stroke-width="0.6"/>
<path d="M22 50 V100 H28 V55 Z" fill="#d8d4a2" stroke="#666" stroke-width="0.5"/>
<path d="M28 55 H133 V100 H28 Z" fill="#c8c494"/>
<path d="M28 55 H133 V62 H28 Z" fill="#9a9670"/>
<path d="M28 62 L40 62 L40 100 H28 Z" fill="#a8a47a"/>
<path d="M133 57 L190 43 V100 H133 Z" fill="#dcd8a6" stroke="#555" stroke-width="0.6"/>
<path d="M122 40 L145 38 L144 47 L122 49 Z" fill="#dcdcdc" stroke="#666" stroke-width="0.5"/>
<path d="M54 4 Q60 -4 90 0 L95 16 Q80 24 58 18 Z" fill="#8e6c3c"/>
<path d="M90 4 Q96 8 94 16 L88 16 Z" fill="#eac8a8"/>
<path d="M50 26 Q60 18 88 20 L98 28 L120 40 L124 46 L114 50 L96 44 L94 94 L50 94 L48 56 L38 46 Z" fill="#2aa0d8"/>
<path d="M52 28 H92 M40 42 H96 M48 56 H94 M48 70 H94 M48 84 H94 M100 32 L98 44 M110 37 L107 48" stroke="#e8542a" stroke-width="6" fill="none"/>
<ellipse cx="124" cy="43" rx="5" ry="3" fill="#eac8a8"/>
<path d="M52 86 Q84 78 112 84 Q120 90 118 100 H56 Z" fill="#5a6a48"/>
</svg><span class="badge green">Not started</span></div><div class="title">Adaptive Learning</div><div class="lang">IT</div><div class="div"></div><div class="foot"><span class="ficon"><svg width="13" height="11" viewBox="0 0 13 11"><rect x="0.6" y="0.6" width="11.8" height="8.4" rx="1" fill="none" stroke="#555" stroke-width="1.2"/><path d="M5 2.8 L8.4 4.8 L5 6.8 Z" fill="#444"/><rect x="4" y="9.6" width="5" height="1.3" fill="#444"/></svg></span><span class="ftxt">E-learning</span><span class="kebab"><svg width="4" height="14" viewBox="0 0 4 14"><circle cx="2" cy="2" r="1.55" fill="#4a4a4a"/><circle cx="2" cy="7" r="1.55" fill="#4a4a4a"/><circle cx="2" cy="12" r="1.55" fill="#4a4a4a"/></svg></span></div></div><div class="stack2" style="left:1043.8px;top:810px"></div><div class="stack1" style="left:1040.3px;top:805px"></div><div class="card" style="left:1036.8px;top:531px"><div class="img"></div><div class="title">All about learning<br>technology and social<br>learning</div><div class="abs" style="left:11px;top:175px;width:22px;height:22px;border-radius:50%;background:#e4e4e4"></div><div class="abs" style="left:41px;top:173px;font-size:11px;line-height:14px;color:#0b64d4;letter-spacing:0.3px">Tina Way</div><div class="abs" style="left:41px;top:187px;font-size:11px;line-height:14px;color:#777;letter-spacing:0.3px">8 years ago</div><div class="lang">1 view</div><div class="div"></div><div class="foot"><span class="ficon"><svg width="13" height="12" viewBox="0 0 13 12"><rect x="2.5" y="1.5" width="10" height="8.5" rx="1" fill="#555"/><path d="M0.7 3 V11.3 H10" fill="none" stroke="#555" stroke-width="1.3"/><rect x="5.5" y="0" width="4" height="2" fill="#555"/><path d="M6.2 3.8 L9.2 5.8 L6.2 7.8 Z" fill="#fff"/></svg></span><span class="ftxt">Playlist</span><span class="kebab"><svg width="4" height="14" viewBox="0 0 4 14"><circle cx="2" cy="2" r="1.55" fill="#4a4a4a"/><circle cx="2" cy="7" r="1.55" fill="#4a4a4a"/><circle cx="2" cy="12" r="1.55" fill="#4a4a4a"/></svg></span></div></div><div class="card" style="left:1259px;top:531px"><div class="img"><svg width="200" height="100" viewBox="0 0 200 100">
<rect width="200" height="100" fill="#86c4b6"/>
<path d="M0 0 H200 V20 Q150 10 80 18 Q30 22 0 34 Z" fill="#a0d0c4"/>
<ellipse cx="112" cy="72" rx="135" ry="57" fill="#e0705e"/>
<ellipse cx="118" cy="56" rx="80" ry="19" fill="#84c8ba"/>
<path d="M40 45 Q80 34 120 34 Q170 36 196 50 Q170 40 120 38 Q70 40 40 50 Z" fill="#b85848" opacity="0.5"/>
<path d="M0 70 Q40 88 100 94 Q160 98 200 88 V100 H0 Z" fill="#d46452"/>
<path d="M20 28 L44 24 L50 50 L38 54 Z" fill="#dadfcf"/>
<path d="M150 28 L168 27 L168 46 L152 46 Z" fill="#dadfcf"/>
<path d="M18 74 L40 72 L40 100 H18 Z" fill="#dadfcf"/>
<path d="M34 61 L56 63 L56 70 L34 68 Z" fill="#dadfcf"/>
<path d="M0 63 Q80 76 158 94" stroke="#e2e8dc" stroke-width="3" fill="none"/>
<path d="M156 96 Q172 70 200 56" stroke="#e2e8dc" stroke-width="3" fill="none"/>
<path d="M136 82 Q150 76 166 82 L160 92 Q148 94 136 90 Z" fill="#c45848"/>
</svg><span class="badge green">Not started</span></div><div class="title">Completing Safety<br>Checklists</div><div class="lang">EN</div><div class="div"></div><div class="foot"><span class="ficon"><svg width="13" height="11" viewBox="0 0 13 11"><rect x="0.6" y="0.6" width="11.8" height="8.4" rx="1" fill="none" stroke="#555" stroke-width="1.2"/><path d="M5 2.8 L8.4 4.8 L5 6.8 Z" fill="#444"/><rect x="4" y="9.6" width="5" height="1.3" fill="#444"/></svg></span><span class="ftxt">E-learning</span><span class="kebab"><svg width="4" height="14" viewBox="0 0 4 14"><circle cx="2" cy="2" r="1.55" fill="#4a4a4a"/><circle cx="2" cy="7" r="1.55" fill="#4a4a4a"/><circle cx="2" cy="12" r="1.55" fill="#4a4a4a"/></svg></span></div></div><div class="card" style="left:148px;top:908px"><div class="img"><svg width="200" height="100" viewBox="0 0 200 100">
<rect width="200" height="100" fill="#5c4028"/>
<path d="M0 4 Q40 0 90 6 T200 4" stroke="#46301e" stroke-width="3" fill="none"/>
<path d="M0 13 Q60 8 110 14 T200 12" stroke="#684c34" stroke-width="2.5" fill="none"/>
<path d="M0 22 Q50 18 100 24 T200 20" stroke="#4a3420" stroke-width="2" fill="none"/>
<path d="M0 30 Q60 28 120 32 T200 30" stroke="#6a4c30" stroke-width="2" fill="none"/>
<rect x="69" y="37" width="63" height="40" fill="#e08888" stroke="#161616" stroke-width="3"/>
<rect x="71" y="39" width="59" height="2" fill="#c8c8c8"/>
<path d="M32 42 L38 48" stroke="#4aa080" stroke-width="2"/>
</svg><span class="badge dark">Completed</span></div><div class="title"></div><div class="lang">EN</div><div class="div"></div><div class="foot"><span class="ficon"><svg width="13" height="11" viewBox="0 0 13 11"><rect x="0.6" y="0.6" width="11.8" height="8.4" rx="1" fill="none" stroke="#555" stroke-width="1.2"/><path d="M5 2.8 L8.4 4.8 L5 6.8 Z" fill="#444"/><rect x="4" y="9.6" width="5" height="1.3" fill="#444"/></svg></span><span class="ftxt">E-learning</span><span class="kebab"><svg width="4" height="14" viewBox="0 0 4 14"><circle cx="2" cy="2" r="1.55" fill="#4a4a4a"/><circle cx="2" cy="7" r="1.55" fill="#4a4a4a"/><circle cx="2" cy="12" r="1.55" fill="#4a4a4a"/></svg></span></div></div><div class="card" style="left:370.2px;top:908px"><div class="img"><span class="badge light">Watched</span></div><div class="title"></div><div class="lang">EN</div><div class="div"></div><div class="foot"><span class="ficon"><svg width="13" height="11" viewBox="0 0 13 11"><rect x="0.6" y="0.6" width="11.8" height="8.4" rx="1" fill="none" stroke="#555" stroke-width="1.2"/><path d="M5 2.8 L8.4 4.8 L5 6.8 Z" fill="#444"/><rect x="4" y="9.6" width="5" height="1.3" fill="#444"/></svg></span><span class="ftxt">E-learning</span><span class="kebab"><svg width="4" height="14" viewBox="0 0 4 14"><circle cx="2" cy="2" r="1.55" fill="#4a4a4a"/><circle cx="2" cy="7" r="1.55" fill="#4a4a4a"/><circle cx="2" cy="12" r="1.55" fill="#4a4a4a"/></svg></span></div></div><div class="card" style="left:592.4px;top:908px"><div class="img"><div style="position:absolute;inset:0;background:#c9004b"></div><div class="abs" style="left:89px;top:39px;width:23px;height:20px;border:2px solid #fff;border-radius:2px"></div><span class="badge dark">Completed</span></div><div class="title"></div><div class="lang">EN</div><div class="div"></div><div class="foot"><span class="ficon"><svg width="13" height="11" viewBox="0 0 13 11"><rect x="0.6" y="0.6" width="11.8" height="8.4" rx="1" fill="none" stroke="#555" stroke-width="1.2"/><path d="M5 2.8 L8.4 4.8 L5 6.8 Z" fill="#444"/><rect x="4" y="9.6" width="5" height="1.3" fill="#444"/></svg></span><span class="ftxt">E-learning</span><span class="kebab"><svg width="4" height="14" viewBox="0 0 4 14"><circle cx="2" cy="2" r="1.55" fill="#4a4a4a"/><circle cx="2" cy="7" r="1.55" fill="#4a4a4a"/><circle cx="2" cy="12" r="1.55" fill="#4a4a4a"/></svg></span></div></div><div class="card" style="left:814.6px;top:908px"><div class="img"><div style="position:absolute;inset:0;background:#ec1c00"></div><svg class="abs" style="left:92px;top:37px" width="18" height="12" viewBox="0 0 18 12"><path d="M0 0 H11 L17.5 6 V12 H0 Z" fill="#fff"/><path d="M11 0 V6 H17.5" fill="#f6b0a0"/></svg><span class="badge light">Watched</span></div><div class="title"></div><div class="lang">EN</div><div class="div"></div><div class="foot"><span class="ficon"><svg width="13" height="11" viewBox="0 0 13 11"><rect x="0.6" y="0.6" width="11.8" height="8.4" rx="1" fill="none" stroke="#555" stroke-width="1.2"/><path d="M5 2.8 L8.4 4.8 L5 6.8 Z" fill="#444"/><rect x="4" y="9.6" width="5" height="1.3" fill="#444"/></svg></span><span class="ftxt">E-learning</span><span class="kebab"><svg width="4" height="14" viewBox="0 0 4 14"><circle cx="2" cy="2" r="1.55" fill="#4a4a4a"/><circle cx="2" cy="7" r="1.55" fill="#4a4a4a"/><circle cx="2" cy="12" r="1.55" fill="#4a4a4a"/></svg></span></div></div><div class="mask"></div></div></body></html>
